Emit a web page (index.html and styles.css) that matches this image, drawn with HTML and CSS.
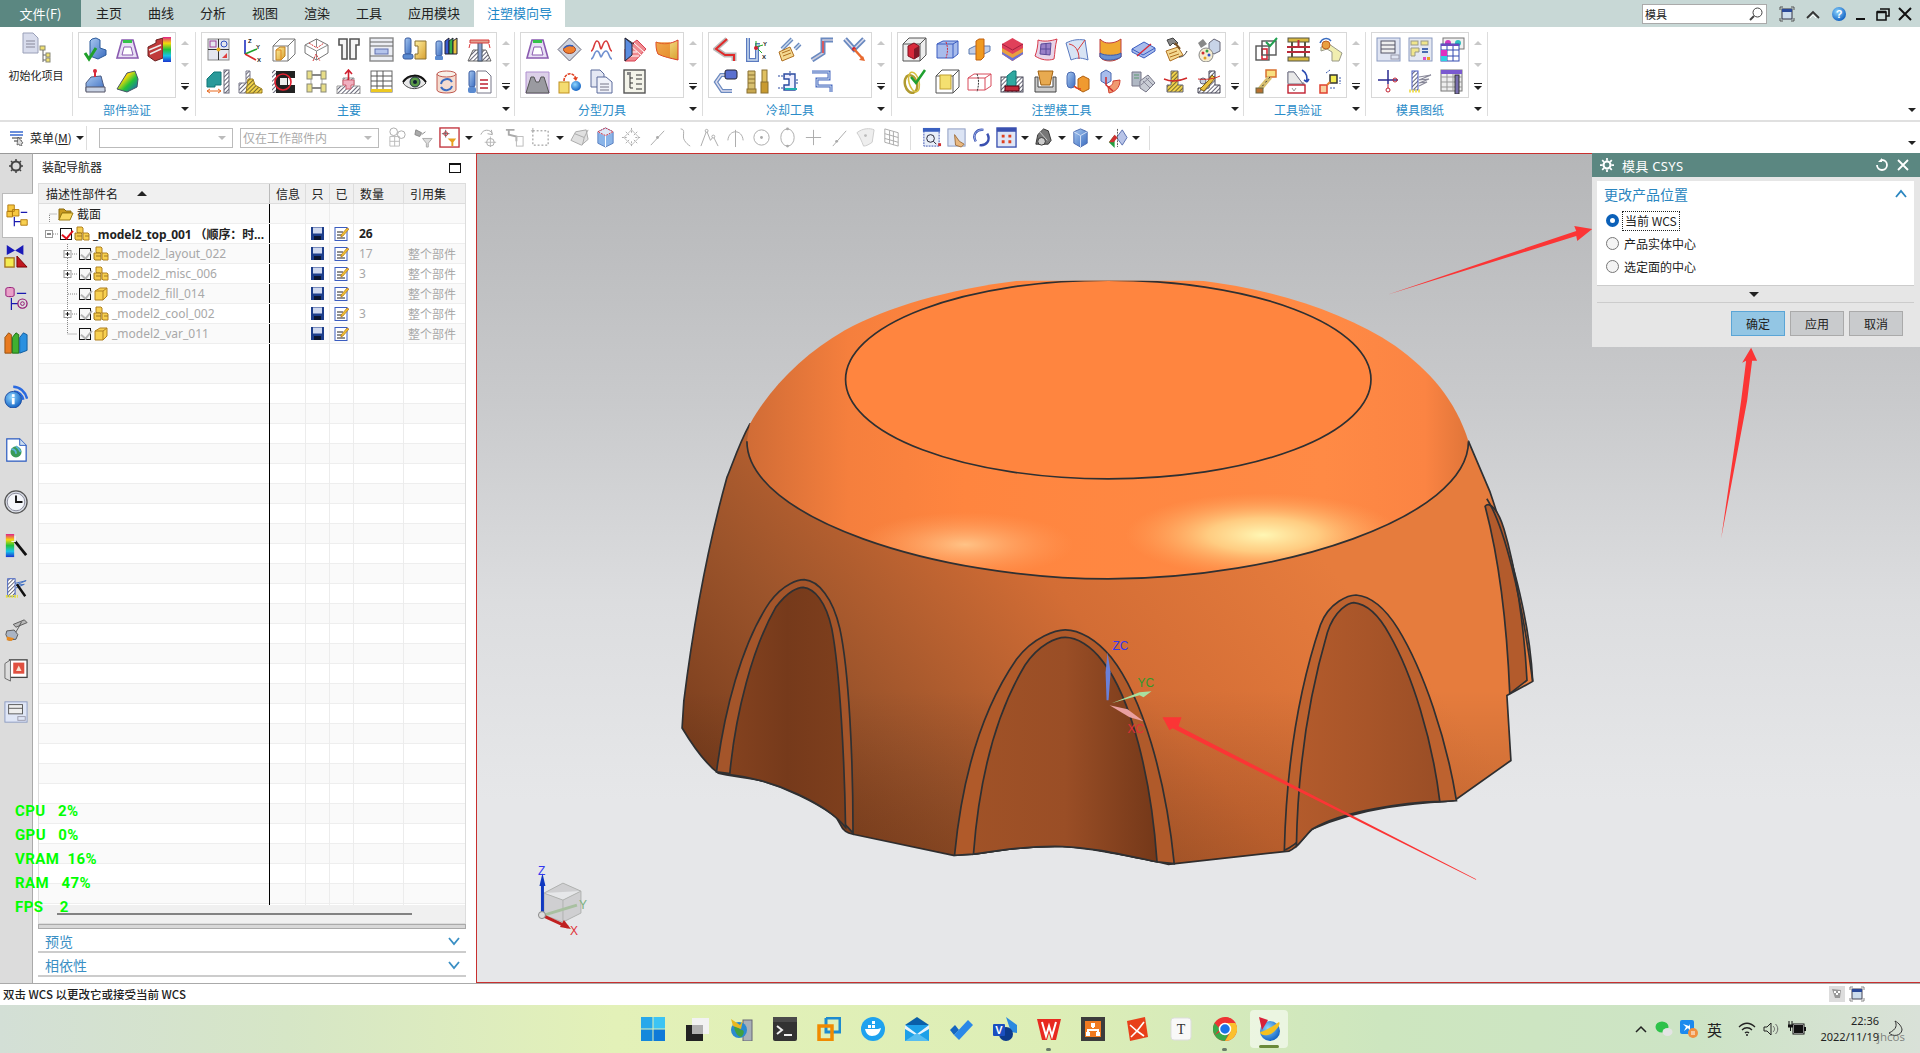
FILE: index.html
```html
<!DOCTYPE html>
<html lang="zh">
<head>
<meta charset="utf-8">
<title>模具 CSYS</title>
<link rel="stylesheet" href="styles.css">
</head>
<body>
<svg class="defs" xmlns="http://www.w3.org/2000/svg">
<defs>
<pattern id="h" width="3" height="3" patternUnits="userSpaceOnUse" patternTransform="rotate(45)"><rect width="3" height="3" fill="#fff"/><rect width="1" height="3" fill="#667"/></pattern>
<pattern id="hy" width="3" height="3" patternUnits="userSpaceOnUse" patternTransform="rotate(45)"><rect width="3" height="3" fill="#f1d24a"/><rect width="1" height="3" fill="#776a30"/></pattern>
<linearGradient id="rb" x1="0" y1="0" x2="0" y2="1"><stop offset="0" stop-color="#e0218a"/><stop offset=".25" stop-color="#f5d90a"/><stop offset=".5" stop-color="#22c23a"/><stop offset=".75" stop-color="#19c4e8"/><stop offset="1" stop-color="#1a34d0"/></linearGradient>
<linearGradient id="rb2" x1="0" y1="0" x2="1" y2="1"><stop offset="0" stop-color="#e8352a"/><stop offset=".35" stop-color="#f5d90a"/><stop offset=".6" stop-color="#22c23a"/><stop offset="1" stop-color="#1a50e0"/></linearGradient>
<linearGradient id="bl" x1="0" y1="0" x2="1" y2="1"><stop offset="0" stop-color="#a8c8f0"/><stop offset="1" stop-color="#3a6cc0"/></linearGradient>
<linearGradient id="yw" x1="0" y1="0" x2="1" y2="1"><stop offset="0" stop-color="#fff0a0"/><stop offset="1" stop-color="#d8a030"/></linearGradient>
<radialGradient id="gl" cx=".4" cy=".35" r=".7"><stop offset="0" stop-color="#8fd6ff"/><stop offset="1" stop-color="#0b5cc0"/></radialGradient>

<symbol id="p1" viewBox="0 0 25 25"><path d="M9 2l4-1 4 2v8l6 2v5l-8 4-8-3V4z" fill="url(#bl)" stroke="#2a5a9a"/><path d="M2 16l4 6 7-11" fill="none" stroke="#1fa02a" stroke-width="3"/></symbol>
<symbol id="p2" viewBox="0 0 25 25"><path d="M7 3h11l5 18H2z" fill="#e8e0f4" stroke="#8a5ab0" stroke-width="1.6"/><path d="M9 10h7l2 8H7z" fill="#fff" stroke="#8a5ab0"/><rect x="8" y="3" width="9" height="3" fill="#35c24a"/></symbol>
<symbol id="p3" viewBox="0 0 25 25"><path d="M1 10l8-4v-3l7-2v20l-8 3-7-5z" fill="#c03a3a" stroke="#6a2020"/><path d="M2 13l12-5M3 17l11-5" stroke="#eee" stroke-width="1.4"/><rect x="16" y="0" width="8" height="25" fill="url(#rb)"/></symbol>
<symbol id="p4" viewBox="0 0 25 25"><path d="M3 14l5-6 10-1 4 15H3z" fill="url(#bl)" stroke="#4a5a80"/><path d="M3 18h19v5H3z" fill="#c8d2e4" stroke="#556"/><path d="M12 1v7" stroke="#d82a3a" stroke-width="2"/><circle cx="12" cy="2" r="2" fill="#d82a3a"/></symbol>
<symbol id="p5" viewBox="0 0 25 25"><path d="M2 20L12 4l8-2 3 8-1 8-10 5z" fill="url(#rb2)" stroke="#456"/></symbol>

<symbol id="m1" viewBox="0 0 25 25"><rect x="2" y="2" width="21" height="21" fill="#e4e6ee" stroke="#888"/><path d="M12.5 2v21M2 12.5h21" stroke="#333"/><rect x="4" y="4" width="6" height="6" fill="none" stroke="#a0409a"/><circle cx="18" cy="7" r="3" fill="none" stroke="#3050c0"/><path d="M16 21l5-5v5z" fill="#e04040"/><circle cx="12.5" cy="12.5" r="2" fill="#e8b020"/></symbol>
<symbol id="m2" viewBox="0 0 25 25"><path d="M7 17V3" stroke="#2030c0" stroke-width="1.6"/><path d="M7 17l12-5" stroke="#1fa02a" stroke-width="1.6"/><path d="M7 17l11 6" stroke="#d82a2a" stroke-width="1.6"/><text class="ict" x="10" y="6">Z</text><text class="ict" x="18" y="12">Y</text><text class="ict" x="19" y="25">X</text></symbol>
<symbol id="m3" viewBox="0 0 25 25"><path d="M9 2h15v15l-7 7H2V9zM2 9h15v15M17 9l7-7" fill="none" stroke="#777"/><path d="M5 13l4-3h5v9l-4 4H5z" fill="url(#yw)" stroke="#c08020"/><path d="M5 13h5v10" fill="none" stroke="#e08a20"/></symbol>
<symbol id="m4" viewBox="0 0 25 25"><path d="M12.5 2L24 8v8l-11.500 7L1 16V8z" fill="none" stroke="#777"/><path d="M12.500 2v8M1 8l11.500 6L24 8M12.500 14v9" fill="none" stroke="#888"/><path d="M5 6l8 5 7-5M9 24l3-7 4 7" fill="none" stroke="#d83a3a" stroke-dasharray="2 1"/></symbol>
<symbol id="m5" viewBox="0 0 25 25"><path d="M3 2h8v20H6V8H3zM14 2h9v6h-3v14h-6z" fill="#f4f4f4" stroke="#555" stroke-width="1.600"/></symbol>
<symbol id="m6" viewBox="0 0 25 25"><rect x="1" y="1" width="23" height="23" fill="#eceef4" stroke="#888" stroke-width="1.400"/><path d="M1 5h23M1 9h23M1 19h23" stroke="#666"/><rect x="6" y="12" width="13" height="5" fill="#b4c4ec" stroke="#6070b0"/></symbol>
<symbol id="m7" viewBox="0 0 25 25"><rect x="3" y="1" width="6" height="16" rx="2" fill="url(#bl)" stroke="#3a5ca0"/><rect x="1" y="17" width="10" height="5" rx="2" fill="#5a8ad0" stroke="#3a5ca0"/><path d="M13 4h11v18H13v-5h3v-8h-3z" fill="url(#yw)" stroke="#8a7030"/></symbol>
<symbol id="m8" viewBox="0 0 25 25"><rect x="2" y="4" width="6" height="15" rx="2" fill="url(#bl)" stroke="#3a5ca0"/><rect x="1" y="19" width="8" height="4" rx="1" fill="#5a8ad0"/><path d="M11 4l4-3v16h-4z" fill="#3a5ad0" stroke="#223"/><path d="M15 4l4-3v16h-4z" fill="#35b04a" stroke="#223"/><path d="M19 4l4-3v16h-4z" fill="#e8c040" stroke="#223"/></symbol>
<symbol id="m9" viewBox="0 0 25 25"><path d="M1 24l5-11h13l5 11z" fill="url(#h)" stroke="#666"/><rect x="11" y="5" width="4" height="19" fill="#8aa0d0" stroke="#456"/><path d="M3 3h19v3H3z" fill="#e0a090" stroke="#d83a3a"/><path d="M3 7l-1 4M22 7l1 4" stroke="#d83a3a"/></symbol>
<symbol id="m10" viewBox="0 0 25 25"><path d="M1 10l7-7h7v13H9v2H1z" fill="#2a9a9a" stroke="#177"/><path d="M1 22h14M1 22l3-2M1 22l3 2M15 22l-3-2M15 22l-3 2" stroke="#e86a20" fill="none"/><rect x="18" y="1" width="5" height="23" fill="url(#h)" stroke="#667"/></symbol>
<symbol id="m11" viewBox="0 0 25 25"><path d="M1 24V14h7V2h4v12h4v10z" fill="url(#h)" stroke="#778"/><path d="M8 24l2-14h5l2 6 7 4v4z" fill="url(#hy)" stroke="#a08020"/></symbol>
<symbol id="m12" viewBox="0 0 25 25"><path d="M1 2h23v7H17v7h7v8H1z" fill="#222"/><rect x="1" y="1" width="4" height="23" fill="url(#h)"/><circle cx="12" cy="13" r="8" fill="none" stroke="#e02030" stroke-width="1.600"/><rect x="9" y="9" width="7" height="7" fill="#eee"/></symbol>
<symbol id="m13" viewBox="0 0 25 25"><path d="M7 6h11M7 19h11" stroke="#888" stroke-width="2"/><path d="M7 6v13M18 6v13" stroke="#aaa"/><rect x="3" y="2" width="5" height="8" fill="#e8de88" stroke="#887"/><rect x="17" y="2" width="5" height="8" fill="#e8de88" stroke="#887"/><rect x="3" y="15" width="5" height="8" fill="#e8de88" stroke="#887"/><rect x="17" y="15" width="5" height="8" fill="#e8de88" stroke="#887"/></symbol>
<symbol id="m14" viewBox="0 0 25 25"><path d="M1 25v-8h6V9h11v8h6v8z" fill="url(#h)" stroke="#999"/><path d="M7 11h11v5h-3v4h-5v-4H7z" fill="#f0b0c0" stroke="#d06070"/><path d="M12.500 1v10M9 5l3.500-4L16 5" fill="none" stroke="#d02030" stroke-width="1.600"/></symbol>
<symbol id="m15" viewBox="0 0 25 25"><rect x="2" y="2" width="21" height="21" fill="#fff" stroke="#666"/><path d="M2 7h21M2 12h21M2 17h21M8 2v21M14 2v21" stroke="#555"/><rect x="2" y="20" width="21" height="3" fill="#ecc820"/></symbol>
<symbol id="m16" viewBox="0 0 25 25"><path d="M1 14C6 6 18 5 24 14c-6 7-17 8-23 0z" fill="#e8e8e8" stroke="#444"/><circle cx="13" cy="13" r="5" fill="#5a9a48" stroke="#234"/><circle cx="13" cy="13" r="2" fill="#123"/><path d="M1 13C6 5 18 4 24 13" fill="none" stroke="#111" stroke-width="2"/></symbol>
<symbol id="m17" viewBox="0 0 25 25"><path d="M3 5v16c0 4 19 4 19 0V5" fill="#f4dcd0" stroke="#c05a50"/><ellipse cx="12.500" cy="5" rx="9.500" ry="3" fill="#f8f0e8" stroke="#c05a50"/><path d="M7 15a6 6 0 0 1 11-2M18 17a6 6 0 0 1-11 1" fill="none" stroke="#3a6cc0" stroke-width="2"/></symbol>
<symbol id="m18" viewBox="0 0 25 25"><rect x="2" y="2" width="6" height="16" rx="2" fill="url(#bl)" stroke="#3a5ca0"/><rect x="1" y="18" width="8" height="6" rx="2" fill="#5a8ad0"/><path d="M10 2h9l5 5v17H10z" fill="#fff" stroke="#778"/><path d="M13 11h8M13 15h8M13 19h8" stroke="#c02030" stroke-width="1.400"/></symbol>

<symbol id="s3" viewBox="0 0 25 25"><path d="M2 14c3 0 3-10 6-10s3 8 4 8 2-8 5-8 3 10 6 10" fill="none" stroke="#d83a3a" stroke-width="1.600"/><path d="M2 22c3 0 3-8 6-8s3 6 4 6 2-6 5-6 3 8 6 8" fill="none" stroke="#7090d0" stroke-width="1.600"/></symbol>
<symbol id="s2" viewBox="0 0 25 25"><path d="M12.500 1L24 12.500 12.500 24 1 12.500z" fill="#d0d4e0" stroke="#667"/><ellipse cx="12.500" cy="12.500" rx="6" ry="4" fill="#f08030" stroke="#a04020"/><path d="M7 11c3-3 7-3 9-2" stroke="#3060c0" fill="none" stroke-width="1.500"/></symbol>
<symbol id="s4" viewBox="0 0 25 25"><path d="M3 12L15 3l9 9-11 12H3z" fill="#f08a90" stroke="#d84050"/><path d="M8 8l11 10M12 6l10 9M3 15h12M8 19h9" stroke="#fff"/><path d="M3 1v23l7-6V7z" fill="#5a8ce0" stroke="#223"/><path d="M3 1l9 6" stroke="#223"/></symbol>
<symbol id="s5" viewBox="0 0 25 25"><path d="M2 5c7 3 15 2 22-2v20c-8-2-14-3-20-6-2-4-2-8-2-12z" fill="url(#yw)" stroke="#d83a2a"/><path d="M2 5c0 4 0 9 2 12 4 2 8 3 12 4V5" fill="#e8781a" opacity=".6"/></symbol>
<symbol id="s6" viewBox="0 0 25 25"><path d="M1 24V3h23v21z" fill="#dcd0e8" stroke="#b090d0"/><path d="M1 24l5-16h3l2 5h3l2-5h3l5 16z" fill="#9a9aa0" stroke="#555"/></symbol>
<symbol id="s7" viewBox="0 0 25 25"><rect x="2" y="13" width="10" height="11" fill="#f4dc70" stroke="#c09020"/><circle cx="19" cy="17" r="5" fill="url(#gl)"/><path d="M7 12C7 3 18 2 19 11" fill="none" stroke="#e04020" stroke-width="1.600" stroke-dasharray="3 1"/><path d="M16 9l3 3 2-4" fill="#e04020"/></symbol>
<symbol id="s8" viewBox="0 0 25 25"><path d="M2 1h9l4 4v13H2z" fill="#e4e8f4" stroke="#5a6a9a"/><path d="M8 8h9l6 5v11H8z" fill="#f0f2fa" stroke="#5a6a9a"/><path d="M11 15h9M11 18h9M11 21h9" stroke="#778"/></symbol>
<symbol id="s9" viewBox="0 0 25 25"><rect x="2" y="1" width="21" height="23" fill="#f4f4ea" stroke="#555" stroke-width="1.400"/><path d="M8 5v14M8 9h3M8 14h3M8 19h3M14 6h6M14 10h6M14 15h6M14 20h6" stroke="#333"/><rect x="5" y="3" width="4" height="3" fill="#888"/></symbol>

<symbol id="c1" viewBox="0 0 25 25"><path d="M14 2L3 12l9 6h9v6" fill="none" stroke="#bbb" stroke-width="5"/><path d="M14 2L3 12l9 6h9v6" fill="none" stroke="#e02a2a" stroke-width="2"/></symbol>
<symbol id="c2" viewBox="0 0 25 25"><path d="M3 1v22h9V8h3" fill="none" stroke="#5a7ac0" stroke-width="4"/><path d="M3 1v22h9V8h3" fill="none" stroke="#cde" stroke-width="1.500"/><path d="M11 10l7-2M11 10V4M11 10l6 6" stroke="#2a2" /><text class="ict" x="18" y="9">Y</text><text class="ict" x="17" y="22">X</text><circle cx="11" cy="11" r="2" fill="#d02030"/></symbol>
<symbol id="c3" viewBox="0 0 25 25"><path d="M5 12L15 2M18 12l5-5" fill="none" stroke="#6a8ac0" stroke-width="4"/><path d="M5 12L15 2M18 12l5-5" fill="none" stroke="#cde" stroke-width="1.400"/><path d="M2 15l11-5 4 9-12 5z" fill="#f4d890" stroke="#b07020"/><path d="M5 16l8-3M6 19l8-3" stroke="#b07020"/></symbol>
<symbol id="c4" viewBox="0 0 25 25"><path d="M2 23l11-7V3h10" fill="none" stroke="#6a8ac0" stroke-width="5"/><path d="M2 23l11-7V3h10" fill="none" stroke="#ccd" stroke-width="1.500"/><path d="M13 4v12" stroke="#e03a3a" stroke-width="1.500"/></symbol>
<symbol id="c5" viewBox="0 0 25 25"><path d="M3 2l9 10L22 2" fill="none" stroke="#6a8ac0" stroke-width="5"/><path d="M3 2l9 10L22 2" fill="none" stroke="#dde" stroke-width="1.500"/><circle cx="12" cy="12" r="2" fill="#d02030"/><path d="M12 12l9 10" stroke="#e86a30" stroke-width="2.500"/><path d="M23 24l-6-1 4-4z" fill="#e86a30"/></symbol>
<symbol id="c6" viewBox="0 0 25 25"><path d="M16 6H8L3 13l6 9h10" fill="none" stroke="#6a8ac0" stroke-width="4"/><path d="M16 6H8L3 13l6 9h10" fill="none" stroke="#dde" stroke-width="1.400"/><rect x="12" y="1" width="12" height="9" rx="2" fill="#5a70d0" stroke="#223"/></symbol>
<symbol id="c7" viewBox="0 0 25 25"><path d="M3 2h7v20H3zM3 6h7M3 10h7M3 14h7" fill="#d8c070" stroke="#8a7030"/><rect x="2" y="20" width="9" height="4" fill="#c8a850" stroke="#8a7030"/><rect x="17" y="1" width="5" height="14" fill="#e0c060" stroke="#8a7030"/><rect x="16" y="13" width="7" height="11" fill="#c89a30" stroke="#8a7030"/></symbol>
<symbol id="c8" viewBox="0 0 25 25"><path d="M7 5h11v16H7v-5h5V10H7z" fill="#eef" stroke="#2a4aa0" stroke-width="1.400"/><path d="M1 7h7M1 19h7M13 2v5M20 10v5" stroke="#2a4aa0" stroke-dasharray="2 1"/><path d="M8 20h12" stroke="#20b0b0" stroke-width="2"/></symbol>
<symbol id="c9" viewBox="0 0 25 25"><path d="M2 3h17v7H7v7h14v6" fill="none" stroke="#4a6ac0" stroke-width="3"/><path d="M2 3h17v7H7v7h14v6" fill="none" stroke="#cde" stroke-width="1"/></symbol>

<symbol id="t1" viewBox="0 0 25 25"><path d="M1 7l6-6h17v17l-6 6H1z" fill="#eee" stroke="#555"/><path d="M1 7h17v17M18 7l6-6" fill="none" stroke="#555"/><path d="M6 9l6-3 5 3v10l-5 3-6-3z" fill="#d8283a" stroke="#801020"/><path d="M12 12l5-3v10l-5 3z" fill="#801828"/></symbol>
<symbol id="t2" viewBox="0 0 25 25"><path d="M2 7l6-3h15v13l-5 4H2z" fill="#a8bcec" stroke="#3a5cc0"/><path d="M2 7h16v14M18 7l5-3" fill="none" stroke="#3a5cc0"/><path d="M11 5c2 5 2 10 0 16" stroke="#d02a3a" fill="none" stroke-dasharray="2 1"/></symbol>
<symbol id="t3" viewBox="0 0 25 25"><path d="M2 12l6-3h15v5l-6 3H2z" fill="#c0cde8" stroke="#5a7ab0"/><path d="M9 4l3-2h5v18l-3 3H9z" fill="#f09a20" stroke="#c06010"/></symbol>
<symbol id="t4" viewBox="0 0 25 25"><path d="M12.500 1L23 7v10l-10.500 7L2 17V7z" fill="#e0405a"/><path d="M2 11l10.500 6L23 11v6l-10.500 7L2 17z" fill="#e8a040"/><path d="M2 15l10.500 6L23 15v2l-10.500 7L2 17z" fill="#6a70d8"/><path d="M2 7l10.500 6L23 7" fill="none" stroke="#a02040"/></symbol>
<symbol id="t5" viewBox="0 0 25 25"><path d="M5 3c6 2 13 1 19-1-2 7-2 14-3 20-6 2-13 1-19-3 2-5 3-11 3-16z" fill="#e8d4e8" stroke="#d83a4a"/><path d="M8 7l10-1-1 12-10-1zM13 6v12M8 12h10" fill="#9a80c8" stroke="#5a4a98"/></symbol>
<symbol id="t6" viewBox="0 0 25 25"><path d="M1 6c6-3 11-4 19-3l3 20c-8-3-12-2-17 0z" fill="#d8e4f4" stroke="#5a7ac0"/><path d="M4 7c6 1 10 6 10 15M20 3L12 14" fill="none" stroke="#d83a3a"/></symbol>
<symbol id="t7" viewBox="0 0 25 25"><path d="M2 2c3 3 5 4 9 4 4 0 8-1 12-4v18c-4 3-8 4-11 4-4 0-8-1-10-4z" fill="#f0a830" stroke="#c04040"/><path d="M2 16c4 3 17 3 21 0v4c-4 3-17 5-21 0z" fill="#6a90d0" stroke="#3a5ab0"/></symbol>
<symbol id="t8" viewBox="0 0 25 25"><path d="M1 12l12-7 11 6v3l-11 7-12-6z" fill="#a8bcec" stroke="#3a5cc0"/><path d="M1 12l11 6 12-7" fill="none" stroke="#3a5cc0"/><path d="M6 19L20 7" stroke="#d82a3a" stroke-width="1.400"/></symbol>
<symbol id="t9" viewBox="0 0 25 25"><path d="M3 14l12-4 5 8-13 6z" fill="#f4d890" stroke="#b07020"/><path d="M6 17l8-3M7 20l9-3" stroke="#b07020"/><path d="M4 3l6-2 5 5-3 2-2-2-3 3z" fill="#888" stroke="#444"/><path d="M12 6l5 6" stroke="#7a5020" stroke-width="2"/><path d="M16 20c4 0 6-2 8-6" fill="none" stroke="#333"/></symbol>
<symbol id="t10" viewBox="0 0 25 25"><path d="M13 6l5-4 6 3v9l-6 3-5-3z" fill="#c8d4e8" stroke="#667"/><path d="M2 6l5-4 4 5-6 4z" fill="#888"/><circle cx="10" cy="18" r="7" fill="#f4ecd0" stroke="#888"/><circle cx="7" cy="16" r="1.500" fill="#d03030"/><circle cx="11" cy="14" r="1.500" fill="#30a040"/><circle cx="13" cy="18" r="1.500" fill="#3050d0"/><circle cx="9" cy="21" r="1.500" fill="#e0a020"/></symbol>
<symbol id="t11" viewBox="0 0 25 25"><ellipse cx="9" cy="15" rx="6" ry="9" fill="none" stroke="#b09a30" stroke-width="2.500" transform="rotate(-15 9 15)"/><ellipse cx="12" cy="13" rx="5" ry="10" fill="none" stroke="#d8c040" stroke-width="1.500" transform="rotate(-15 12 13)"/><path d="M9 8l5 6 9-13" fill="none" stroke="#20a030" stroke-width="2.500"/></symbol>
<symbol id="t12" viewBox="0 0 25 25"><path d="M1 7l6-6h17v17l-6 6H1z" fill="#fff" stroke="#555"/><path d="M1 7h17v17M18 7l6-6" fill="none" stroke="#555"/><rect x="5" y="6" width="11" height="14" fill="#f4e070" stroke="#c0a030"/></symbol>
<symbol id="t13" viewBox="0 0 25 25"><path d="M1 9l6-4h17v12l-6 4H1z" fill="#fff" stroke="#d84a5a"/><path d="M1 9h17v12M18 9l6-4" fill="none" stroke="#d84a5a"/><path d="M10 5c2 5 2 11 0 18" fill="none" stroke="#333" stroke-dasharray="2 1"/></symbol>
<symbol id="t14" viewBox="0 0 25 25"><rect x="1" y="8" width="22" height="15" fill="url(#h)" stroke="#445"/><path d="M7 19V7l6-5h3v17z" fill="#30a8a0" stroke="#177"/><rect x="5" y="17" width="14" height="5" fill="#c02a3a" stroke="#501"/></symbol>
<symbol id="t15" viewBox="0 0 25 25"><path d="M2 8h3v10h15V8h3v15H2z" fill="#ccc" stroke="#444"/><path d="M5 2h15l-3 14H8z" fill="#e8aa50" stroke="#a06010"/></symbol>
<symbol id="t16" viewBox="0 0 25 25"><rect x="2" y="3" width="8" height="16" rx="4" fill="url(#bl)" stroke="#4a6ab0"/><path d="M13 10l5-3 6 3v10l-6 3-5-3z" fill="#f09a30" stroke="#b06010"/><path d="M9 17c3 3 5 3 7 3" fill="none" stroke="#e04020" stroke-width="1.600"/></symbol>
<symbol id="t17" viewBox="0 0 25 25"><path d="M3 4l5-3 5 3v8l-5 3-5-3z" fill="#a8bcec" stroke="#4a6ab0"/><path d="M11 24c6-1 11-5 11-13l-7 1c0 4-2 5-5 6z" fill="#f09a70" stroke="#d04030"/><path d="M8 8v8l7 6" fill="none" stroke="#d02a2a" stroke-width="1.500"/></symbol>
<symbol id="t18" viewBox="0 0 25 25"><path d="M1 3h9v14H1z" fill="#b0b8c4" stroke="#778"/><path d="M9 12l8-6 7 8-9 9-6-4z" fill="#c8ccd4" stroke="#778"/><path d="M12 12l7 7M15 9l7 7M10 16l8-7" stroke="#889"/><path d="M3 6h5M3 9h5" stroke="#5a9a70"/></symbol>
<symbol id="t19" viewBox="0 0 25 25"><path d="M8 2h7v14h5v7H4v-7h4z" fill="url(#hy)" stroke="#667"/><path d="M1 10c7 3 16 2 23-1" fill="none" stroke="#d02a2a" stroke-width="1.400"/></symbol>
<symbol id="t20" viewBox="0 0 25 25"><path d="M13 2h6v14h5v8H2v-5h11z" fill="url(#h)" stroke="#445"/><path d="M4 20l8-8 4-6 3 3-4 5-7 8z" fill="#e8c040" stroke="#806010"/><circle cx="7" cy="12" r="3" fill="#c8d0e0" stroke="#667"/><path d="M2 10c7 1 16 0 22-3" fill="none" stroke="#d02a2a"/></symbol>

<symbol id="v1" viewBox="0 0 25 25"><rect x="2" y="9" width="13" height="14" fill="#fff" stroke="#555" stroke-width="1.400"/><rect x="8" y="12" width="5" height="10" fill="none" stroke="#d82a3a" stroke-width="1.600"/><rect x="8" y="4" width="14" height="14" fill="none" stroke="#555" stroke-width="1.400"/><path d="M12 5l4 4 7-8" fill="none" stroke="#20a050" stroke-width="2"/></symbol>
<symbol id="v2" viewBox="0 0 25 25"><rect x="2" y="1" width="21" height="4" fill="#d8b840" stroke="#554"/><rect x="2" y="20" width="21" height="4" fill="#d8b840" stroke="#554"/><path d="M6 5v15M19 5v15" stroke="#554" stroke-width="2"/><path d="M1 10h23M1 15h23" stroke="#b82a3a" stroke-width="2"/><path d="M12.500 3v7" stroke="#b82a3a" stroke-width="2"/></symbol>
<symbol id="v3" viewBox="0 0 25 25"><path d="M3 10l8-3 13 9-3 8h-7v-9l-5-3-6 2z" fill="#f0eeb0" stroke="#998"/><circle cx="8" cy="8" r="4" fill="#e8a040" stroke="#c06020"/><path d="M2 6C4 1 10 0 13 4" fill="none" stroke="#3a6cc0" stroke-width="1.500"/></symbol>
<symbol id="v4" viewBox="0 0 25 25"><rect x="12" y="1" width="10" height="7" fill="#f8e080" stroke="#d87030" stroke-width="1.500"/><path d="M16 8L6 20" stroke="#d8c070" stroke-width="5"/><path d="M16 8L6 20" stroke="#333" stroke-dasharray="2 3"/><rect x="2" y="19" width="7" height="5" fill="#b87030" stroke="#664"/></symbol>
<symbol id="v5" viewBox="0 0 25 25"><path d="M2 3h6l10 14v-3H2z" fill="#ddd" stroke="#778"/><path d="M2 3h6l9 12H2z" fill="#e8e8e8" stroke="#778"/><rect x="2" y="16" width="17" height="8" fill="#fff" stroke="#c02030" stroke-width="1.400"/><path d="M16 1c5 3 6 8 4 12M21 13l-3-2M21 13l2-3" fill="none" stroke="#2a4ab0" stroke-width="1.600"/><path d="M6 19l2 3 2-3" fill="none" stroke="#999"/></symbol>
<symbol id="v6" viewBox="0 0 25 25"><rect x="12" y="6" width="7" height="8" fill="#f4ec50" stroke="#333" stroke-width="1.500"/><rect x="2" y="16" width="7" height="8" fill="#f8d0a0" stroke="#e04030" stroke-width="1.500"/><path d="M8 4l4-3M22 8v7M12 19h5" stroke="#3a5ab0" stroke-dasharray="2 1"/><path d="M9 16l3-3" stroke="#e08030" stroke-width="2"/></symbol>

<symbol id="d1" viewBox="0 0 25 25"><rect x="1" y="1" width="23" height="23" fill="#dfe4f2" stroke="#8a9ac0"/><rect x="5" y="4" width="14" height="12" fill="#eee" stroke="#556"/><path d="M5 8h14M5 12h14" stroke="#556"/><rect x="15" y="18" width="8" height="4" fill="none" stroke="#99a"/></symbol>
<symbol id="d2" viewBox="0 0 25 25"><rect x="1" y="1" width="23" height="23" fill="#e4e8f2" stroke="#8a9ac0"/><rect x="3" y="4" width="7" height="4" fill="#f0e68c" stroke="#998"/><rect x="13" y="4" width="7" height="4" fill="#f0e68c" stroke="#998"/><path d="M3 11h8v4H7v4H3z" fill="#f0e68c" stroke="#998"/><path d="M14 12h6M14 15h6" stroke="#4a6ab0" stroke-width="2"/><rect x="15" y="20" width="3" height="3" fill="#e04ac0"/><rect x="19" y="20" width="3" height="3" fill="#f0a020"/></symbol>
<symbol id="d3" viewBox="0 0 25 25"><rect x="3" y="1" width="21" height="11" fill="#f0f0f0" stroke="#777"/><circle cx="8" cy="6" r="3" fill="#d03ac0"/><circle cx="18" cy="6" r="3" fill="#30c0c0"/><rect x="1" y="7" width="18" height="17" fill="#fff" stroke="#334ab0"/><path d="M1 13h18M1 19h18M7 7v17M13 7v17" stroke="#334ab0"/><rect x="1" y="13" width="6" height="6" fill="#e030c0"/><rect x="1" y="19" width="6" height="5" fill="#30d0e0"/><rect x="1" y="7" width="18" height="2" fill="#6a4ac0"/></symbol>
<symbol id="d4" viewBox="0 0 25 25"><path d="M12 1v14M2 11h20" stroke="#2a2a90" stroke-width="1.500"/><path d="M12 15v4" stroke="#c02030"/><circle cx="19" cy="11" r="2" fill="none" stroke="#c02030"/><circle cx="12" cy="21" r="2" fill="none" stroke="#c02030"/></symbol>
<symbol id="d5" viewBox="0 0 25 25"><rect x="4" y="2" width="6" height="19" fill="url(#h)" stroke="#4a5ac0"/><path d="M11 8l12-2-12 5 10-1-10 4 8-1-8 4" fill="none" stroke="#889" stroke-width="1.200"/><path d="M1 22h12" stroke="#f0e060" stroke-width="3" stroke-dasharray="2 1"/></symbol>
<symbol id="d6" viewBox="0 0 25 25"><rect x="1" y="1" width="21" height="21" fill="#eee" stroke="#777"/><path d="M1 8h21M1 13h21M1 18h21M7 4v18M13 4v18" stroke="#999"/><rect x="1" y="1" width="21" height="4" fill="#7a5ad0"/><rect x="15" y="6" width="4" height="19" fill="#7a70b0" stroke="#333"/></symbol>

<symbol id="asm" viewBox="0 0 16 16"><path d="M3 1h5l1 1v5H4L3 6z" fill="#f8d050" stroke="#b08020"/><path d="M9 7h5l1 1v6H10L9 13z" fill="#f8d050" stroke="#b08020"/><path d="M1 7h6l1 1v6H2l-1-1z" fill="#f4c848" stroke="#a07a20"/><path d="M3 10h5M11 10h4" stroke="#a07a20"/></symbol>
<symbol id="part" viewBox="0 0 16 16"><path d="M2 5l5-3h7v8l-4 4H2z" fill="#f8d050" stroke="#b08020"/><path d="M2 5h8v9M10 5l4-3" fill="none" stroke="#b08020"/></symbol>
<symbol id="save" viewBox="0 0 15 15"><path d="M1 1h13v13H1z" fill="#1c3d8a"/><rect x="3" y="1.500" width="9" height="6" fill="#cfd8ee"/><rect x="4" y="10" width="7" height="4" fill="#0a1530"/></symbol>
<symbol id="edit" viewBox="0 0 15 15"><rect x="1" y="1.500" width="12" height="13" fill="#fff" stroke="#3a5cc0"/><path d="M3 6h6M3 9h6M3 12h8" stroke="#222"/><path d="M7 9l6-7 2 1-6 7-2 1z" fill="#f0c030" stroke="#a06010" stroke-width=".6"/></symbol>
<symbol id="folder" viewBox="0 0 16 16"><path d="M1 14V3h5l2 2h5v2H4z" fill="#c89a20" stroke="#8a6a10"/><path d="M1 14l3-7h11l-3 7z" fill="#f8d860" stroke="#9a7a10"/></symbol>

<symbol id="g1" viewBox="0 0 22 22"><circle cx="7" cy="5" r="4" fill="none" stroke="#aaa"/><circle cx="15" cy="8" r="4" fill="none" stroke="#aaa"/><path d="M3 10h10v10H3zM8 10v10M3 15h10" fill="none" stroke="#bbb"/></symbol>
<symbol id="g2" viewBox="0 0 22 22"><path d="M3 3l6 3-2 4-5-2zM9 8l4-3" fill="#aaa" stroke="#888"/><path d="M10 12h10l-4 5v4h-2v-4z" fill="#ddd" stroke="#aaa"/></symbol>
<symbol id="g3" viewBox="0 0 22 22"><rect x="1" y="1" width="20" height="20" fill="#fff" stroke="#c0303a" stroke-width="1.400"/><path d="M7 3v8M3 7h8" stroke="#666"/><circle cx="7" cy="7" r="2" fill="none" stroke="#c0303a"/><path d="M9 12h9l-3 4v4h-2v-4z" fill="#e8a020"/></symbol>
<symbol id="g4" viewBox="0 0 22 22"><path d="M3 8c2-6 10-6 12-1M14 3l1 5-5-1" fill="none" stroke="#aaa"/><path d="M13 10v11M7 16h12" stroke="#bbb"/><circle cx="13" cy="16" r="4" fill="none" stroke="#aaa"/></symbol>
<symbol id="g5" viewBox="0 0 22 22"><path d="M2 3h9M5 3v5l8 2v5" fill="none" stroke="#aaa" stroke-width="2"/><rect x="13" y="10" width="7" height="10" fill="none" stroke="#bbb"/></symbol>
<symbol id="g6" viewBox="0 0 22 22"><rect x="3" y="4" width="16" height="15" fill="none" stroke="#888" stroke-dasharray="2 2"/><path d="M1 4h2M3 1v3" stroke="#aaa"/></symbol>
<symbol id="g7" viewBox="0 0 22 22"><path d="M2 14l5-9 11-2 2 10-7 6z" fill="#e0e0e0" stroke="#aaa"/><path d="M6 7l10 4 4-8M16 11l-2 8" fill="none" stroke="#aaa"/></symbol>
<symbol id="g8" viewBox="0 0 22 22"><path d="M3 5l8-4 8 4v12l-8 4-8-4z" fill="#8ab4e8" stroke="#5a80c0"/><path d="M3 5l8 4 8-4M11 9v12" fill="none" stroke="#fff"/><path d="M3 5l8-4 8 4-8 4z" fill="#dde6f6" stroke="#d03040" stroke-dasharray="2 1"/></symbol>
<symbol id="g9" viewBox="0 0 22 22"><path d="M11 3l8 8-8 8-8-8z" fill="none" stroke="#bbb"/><path d="M11 1v6M11 15v6M1 11h6M15 11h6M5 5l4 4M17 5l-4 4M5 17l4-4M17 17l-4-4" stroke="#aaa" stroke-dasharray="2 1"/></symbol>
<symbol id="g10" viewBox="0 0 22 22"><path d="M4 19L18 4" stroke="#aaa"/><circle cx="11" cy="11" r="1.500" fill="#aaa"/></symbol>
<symbol id="g11" viewBox="0 0 22 22"><path d="M8 2c6 0 1 8 4 12 2 3 3 4 6 6" fill="none" stroke="#aaa"/></symbol>
<symbol id="g12" viewBox="0 0 22 22"><path d="M2 20L8 4l4 10 3-4 5 10" fill="none" stroke="#aaa"/><circle cx="8" cy="4" r="1.500" fill="#fff" stroke="#aaa"/><circle cx="15" cy="10" r="1.500" fill="#fff" stroke="#aaa"/></symbol>
<symbol id="g13" viewBox="0 0 22 22"><path d="M3 14c1-12 15-12 16 0M11 3v18" fill="none" stroke="#aaa"/></symbol>
<symbol id="g14" viewBox="0 0 22 22"><circle cx="11" cy="11" r="8" fill="none" stroke="#aaa"/><circle cx="11" cy="11" r="1.500" fill="#aaa"/></symbol>
<symbol id="g15" viewBox="0 0 22 22"><ellipse cx="11" cy="11" rx="7" ry="9" fill="none" stroke="#aaa"/><circle cx="11" cy="2" r="1.500" fill="#aaa"/><circle cx="11" cy="20" r="1.500" fill="#aaa"/></symbol>
<symbol id="g16" viewBox="0 0 22 22"><path d="M11 3v16M3 11h16" stroke="#aaa"/></symbol>
<symbol id="g17" viewBox="0 0 22 22"><path d="M4 20L18 4" stroke="#aaa"/><circle cx="8" cy="15" r="1.500" fill="#aaa"/></symbol>
<symbol id="g18" viewBox="0 0 22 22"><path d="M2 6c6-5 14-5 18-3l-2 13c-3 2-6 4-9 4-2-5-4-10-7-14z" fill="#eee" stroke="#ccc"/><circle cx="11" cy="9" r="1.500" fill="#bbb"/></symbol>
<symbol id="g19" viewBox="0 0 22 22"><path d="M4 2l14 4v14L4 16zM9 3.500v14M13 5v14M4 7l14 4M4 12l14 4" fill="none" stroke="#aaa"/></symbol>
<symbol id="n1" viewBox="0 0 22 22"><rect x="3" y="3" width="16" height="17" fill="#e8eef8" stroke="#3a50b0" stroke-dasharray="2 1"/><rect x="2" y="1" width="18" height="4" fill="#3a60c0"/><circle cx="10" cy="12" r="4" fill="none" stroke="#223"/><path d="M13 15l3 3" stroke="#223"/><rect x="18" y="17" width="3" height="3" fill="#d03030"/></symbol>
<symbol id="n2" viewBox="0 0 22 22"><rect x="2" y="2" width="18" height="18" fill="#dce4f4" stroke="#8a9ac0"/><path d="M9 8l5 7 5 3-3 3-6-2z" fill="#e8b880" stroke="#a07040"/></symbol>
<symbol id="n3" viewBox="0 0 22 22"><path d="M5 15C1 8 6 2 13 3" fill="none" stroke="#3a50b0" stroke-width="2.500"/><path d="M17 7c4 7-1 13-8 12" fill="none" stroke="#3a50b0" stroke-width="2.500"/><path d="M5 15C1 8 6 2 13 3" fill="none" stroke="#9ab0e8"/></symbol>
<symbol id="n4" viewBox="0 0 22 22"><rect x="1" y="1" width="20" height="20" fill="#dfe6f6" stroke="#3a50b0" stroke-width="1.400"/><rect x="1" y="1" width="20" height="4" fill="#3a50b0"/><path d="M6 8h3v3H6zM13 8h3v3h-3zM6 14h3v3H6zM13 14h3v3h-3z" fill="#e04020"/></symbol>
<symbol id="n5" viewBox="0 0 22 22"><path d="M3 18L5 8l6-6 5 2 3 10-3 4z" fill="#777" stroke="#333"/><circle cx="9" cy="15" r="4" fill="#ccc" stroke="#333"/><path d="M7 5l8 9" stroke="#ccc"/></symbol>
<symbol id="n6" viewBox="0 0 22 22"><path d="M4 5l7-3 7 3v12l-7 4-7-4z" fill="url(#bl)" stroke="#4a6ab0"/><path d="M4 5l7 4 7-4M11 9v12" fill="none" stroke="#d4e0f4"/></symbol>
<symbol id="n7" viewBox="0 0 22 22"><path d="M10 11l6-8 5 8-5 8z" fill="#b8c4e8" stroke="#5a70b0"/><path d="M2 16l6-8v14z" fill="#20a040"/><path d="M2 16l6-8 3 3-4 5z" fill="#d03030"/><path d="M11 2v19" stroke="#555" stroke-dasharray="2 1"/></symbol>

<symbol id="l1" viewBox="0 0 26 26"><path d="M2 1h7v7H2zM7 6h7v7H7zM1 8h6v6H1z" fill="#f8c840" stroke="#b07a10"/><path d="M16 9h7M9 14v10M9 19h7" stroke="#1a1ab0" stroke-width="1.300"/><path d="M16 17h7v6h-7z" fill="#f8d050" stroke="#b07a10"/></symbol>
<symbol id="l2" viewBox="0 0 26 26"><path d="M3 1l9 6 9-6v11l-9-5-9 5z" fill="#1a1ab8"/><rect x="1" y="15" width="10" height="10" fill="#f4ec50" stroke="#a07020" stroke-width="1.400"/><path d="M14 25V13l11 12z" fill="#c01820" stroke="#700"/></symbol>
<symbol id="l3" viewBox="0 0 26 26"><path d="M2 2c0-2 9-2 9 0v7c0 2-9 2-9 0z" fill="#e8a0c8" stroke="#901070"/><path d="M14 7h10M8 12v13M8 18h7" stroke="#1a1ab0" stroke-width="1.300"/><circle cx="20" cy="18" r="5" fill="none" stroke="#901070" stroke-width="1.300"/><circle cx="20" cy="18" r="2" fill="none" stroke="#901070"/></symbol>
<symbol id="l4" viewBox="0 0 26 26"><path d="M1 7l4-5 3 2v20H1z" fill="#e87a20" stroke="#94500f"/><path d="M9 7l4-5 3 2v20H9z" fill="#40b030" stroke="#1a6a10"/><path d="M17 7l4-5 4 2v17l-8 3z" fill="#2a90e0" stroke="#105a9a"/></symbol>
<symbol id="l5" viewBox="0 0 26 26"><path d="M10 3c7 0 13 5 15 13M11 8c5 0 9 4 10 9" fill="none" stroke="#2a6ae0" stroke-width="2.600"/><circle cx="10" cy="17" r="9" fill="url(#gl)" stroke="#1a4aa0"/><rect x="8.500" y="15" width="3" height="7" fill="#fff"/><rect x="8.500" y="11" width="3" height="3" fill="#fff"/></symbol>
<symbol id="l6" viewBox="0 0 26 26"><path d="M3 1h14l7 7v17H3z" fill="#fff" stroke="#2a5ac0" stroke-width="1.300"/><path d="M17 1v7h7" fill="#cde" stroke="#2a5ac0"/><circle cx="13" cy="15" r="6" fill="#3a9a58"/><path d="M8 12c3 0 5 2 5 5M13 9c3 2 4 4 5 6" stroke="#5ab0d8" stroke-width="2" fill="none"/></symbol>
<symbol id="l7" viewBox="0 0 26 26"><circle cx="13" cy="13" r="12" fill="#d8dce4" stroke="#555" stroke-width="1.400"/><circle cx="13" cy="13" r="9.500" fill="#f4f6fa" stroke="#889"/><path d="M13 6v7h7" fill="none" stroke="#111" stroke-width="2"/></symbol>
<symbol id="l8" viewBox="0 0 26 26"><rect x="2" y="0" width="9" height="25" fill="url(#rb)"/><path d="M12 8l12 15" stroke="#111" stroke-width="3"/><path d="M12 2v5M8 8h5" stroke="#fff"/></symbol>
<symbol id="l9" viewBox="0 0 26 26"><rect x="4" y="3" width="8" height="19" fill="url(#h)" stroke="#3a5ac0"/><path d="M12 8l12-3-11 5 9-1-9 4" fill="none" stroke="#3a6ac0"/><path d="M2 22h13" stroke="#e8e040" stroke-width="3" stroke-dasharray="2 1"/><path d="M14 9l9 13" stroke="#111" stroke-width="2.600"/></symbol>
<symbol id="l10" viewBox="0 0 26 26"><path d="M10 7l12-5 3 3-12 5zM19 4l-3 6-6 10" fill="#b8b8b8" stroke="#555"/><path d="M3 14l8-1 4 5-2 5-8 1-3-6z" fill="#aab4c4" stroke="#555"/><path d="M3 20l8 2-3 3-5-1z" fill="#e88a20"/></symbol>
<symbol id="l11" viewBox="0 0 26 26"><rect x="6" y="2" width="19" height="19" fill="#fff" stroke="#444" stroke-width="1.400"/><path d="M1 6l6-4v23l-6-3z" fill="#ddd" stroke="#666"/><rect x="10" y="5" width="12" height="12" fill="#e05040"/><path d="M13 14l3-6 3 6z" fill="#f8e0d0"/></symbol>
<symbol id="l12" viewBox="0 0 26 26"><rect x="1" y="2" width="24" height="22" fill="#dfe6f6" stroke="#8a9ac0"/><rect x="5" y="5" width="15" height="10" fill="#eee" stroke="#555"/><path d="M5 9h15" stroke="#555"/><rect x="15" y="18" width="8" height="4" fill="none" stroke="#99a"/></symbol>
</defs>
</svg>

<div class="app">
  <header class="menubar">
    <div class="filetab">文件(F)</div>
    <nav class="tabs">
      <span class="tab">主页</span><span class="tab">曲线</span><span class="tab">分析</span><span class="tab">视图</span><span class="tab">渲染</span><span class="tab">工具</span><span class="tab">应用模块</span><span class="tab tab-on">注塑模向导</span>
    </nav>
    <div class="topright">
      <div class="search"><span>模具</span><svg class="w14" viewBox="0 0 14 14"><circle cx="8.500" cy="5.500" r="4.500" fill="#fff" stroke="#444"/><path d="M5 9l-4 4" stroke="#444" stroke-width="2"/></svg></div>
      <svg class="w16" viewBox="0 0 16 16"><path d="M1 4V1h3M12 1h3v3M15 12v3h-3M4 15H1v-3" fill="none" stroke="#555"/><rect x="3" y="3" width="10" height="10" fill="#cde" stroke="#334"/><rect x="3" y="3" width="10" height="3" fill="#2a4a9a"/></svg>
      <svg class="w16 sp4" viewBox="0 0 16 16"><path d="M2 12l6-6 6 6" fill="none" stroke="#333" stroke-width="1.800"/><path d="M5 12l3-3 3 3" fill="none" stroke="#fff"/></svg>
      <svg class="w16 sp4" viewBox="0 0 16 16"><circle cx="8" cy="8" r="7" fill="url(#gl)"/><text class="qm" x="8" y="12">?</text></svg>
      <svg class="w16" viewBox="0 0 16 16"><path d="M3 13h9" stroke="#111" stroke-width="2"/></svg>
      <svg class="w16" viewBox="0 0 16 16"><path d="M5 3h9v7h-3M2 6h9v8H2z" fill="none" stroke="#111" stroke-width="1.600"/><path d="M2 6h9" stroke="#111" stroke-width="2.500"/></svg>
      <svg class="w16" viewBox="0 0 16 16"><path d="M2 2l12 12M14 2L2 14" stroke="#111" stroke-width="2"/></svg>
    </div>
  </header>

  <section class="ribbon">
    <div class="group g0">
      <div class="initproj">
        <svg class="w32" viewBox="0 0 32 32"><path d="M3 1h10l5 5v15H3z" fill="#d8dcec" stroke="#9aa0b8"/><path d="M6 9h9M6 12h9M6 15h9" stroke="#889"/><rect x="20" y="14" width="5" height="4" fill="#f0e070" stroke="#887"/><path d="M23 18v12M23 23h3M23 28h3" stroke="#666"/><rect x="26" y="21" width="4" height="4" fill="#f0e070" stroke="#887"/><rect x="26" y="26" width="4" height="4" fill="#f0e070" stroke="#887"/></svg>
        <span>初始化项目</span>
      </div>
    </div>

    <div class="group w123">
      <div class="box c3"><svg class="ic"><use href="#p1"/></svg><svg class="ic"><use href="#p2"/></svg><svg class="ic"><use href="#p3"/></svg><svg class="ic"><use href="#p4"/></svg><svg class="ic"><use href="#p5"/></svg></div>
      <div class="arrows"><i class="up"></i><i class="dn"></i><i class="more"></i></div>
      <div class="glabel">部件验证</div><i class="caret"></i>
    </div>

    <div class="group w319">
      <div class="box c9"><svg class="ic"><use href="#m1"/></svg><svg class="ic"><use href="#m2"/></svg><svg class="ic"><use href="#m3"/></svg><svg class="ic"><use href="#m4"/></svg><svg class="ic"><use href="#m5"/></svg><svg class="ic"><use href="#m6"/></svg><svg class="ic"><use href="#m7"/></svg><svg class="ic"><use href="#m8"/></svg><svg class="ic"><use href="#m9"/></svg><svg class="ic"><use href="#m10"/></svg><svg class="ic"><use href="#m11"/></svg><svg class="ic"><use href="#m12"/></svg><svg class="ic"><use href="#m13"/></svg><svg class="ic"><use href="#m14"/></svg><svg class="ic"><use href="#m15"/></svg><svg class="ic"><use href="#m16"/></svg><svg class="ic"><use href="#m17"/></svg><svg class="ic"><use href="#m18"/></svg></div>
      <div class="arrows"><i class="up"></i><i class="dn"></i><i class="more"></i></div>
      <div class="glabel">主要</div><i class="caret"></i>
    </div>

    <div class="group w188">
      <div class="box c5"><svg class="ic"><use href="#p2"/></svg><svg class="ic"><use href="#s2"/></svg><svg class="ic"><use href="#s3"/></svg><svg class="ic"><use href="#s4"/></svg><svg class="ic"><use href="#s5"/></svg><svg class="ic"><use href="#s6"/></svg><svg class="ic"><use href="#s7"/></svg><svg class="ic"><use href="#s8"/></svg><svg class="ic"><use href="#s9"/></svg></div>
      <div class="arrows"><i class="up"></i><i class="dn"></i><i class="more"></i></div>
      <div class="glabel">分型刀具</div><i class="caret"></i>
    </div>

    <div class="group w189">
      <div class="box c5"><svg class="ic"><use href="#c1"/></svg><svg class="ic"><use href="#c2"/></svg><svg class="ic"><use href="#c3"/></svg><svg class="ic"><use href="#c4"/></svg><svg class="ic"><use href="#c5"/></svg><svg class="ic"><use href="#c6"/></svg><svg class="ic"><use href="#c7"/></svg><svg class="ic"><use href="#c8"/></svg><svg class="ic"><use href="#c9"/></svg></div>
      <div class="arrows"><i class="up"></i><i class="dn"></i><i class="more"></i></div>
      <div class="glabel">冷却工具</div><i class="caret"></i>
    </div>

    <div class="group w352">
      <div class="box c10"><svg class="ic"><use href="#t1"/></svg><svg class="ic"><use href="#t2"/></svg><svg class="ic"><use href="#t3"/></svg><svg class="ic"><use href="#t4"/></svg><svg class="ic"><use href="#t5"/></svg><svg class="ic"><use href="#t6"/></svg><svg class="ic"><use href="#t7"/></svg><svg class="ic"><use href="#t8"/></svg><svg class="ic"><use href="#t9"/></svg><svg class="ic"><use href="#t10"/></svg><svg class="ic"><use href="#t11"/></svg><svg class="ic"><use href="#t12"/></svg><svg class="ic"><use href="#t13"/></svg><svg class="ic"><use href="#t14"/></svg><svg class="ic"><use href="#t15"/></svg><svg class="ic"><use href="#t16"/></svg><svg class="ic"><use href="#t17"/></svg><svg class="ic"><use href="#t18"/></svg><svg class="ic"><use href="#t19"/></svg><svg class="ic"><use href="#t20"/></svg></div>
      <div class="arrows"><i class="up"></i><i class="dn"></i><i class="more"></i></div>
      <div class="glabel">注塑模工具</div><i class="caret"></i>
    </div>

    <div class="group w122">
      <div class="box c3"><svg class="ic"><use href="#v1"/></svg><svg class="ic"><use href="#v2"/></svg><svg class="ic"><use href="#v3"/></svg><svg class="ic"><use href="#v4"/></svg><svg class="ic"><use href="#v5"/></svg><svg class="ic"><use href="#v6"/></svg></div>
      <div class="arrows"><i class="up"></i><i class="dn"></i><i class="more"></i></div>
      <div class="glabel">工具验证</div><i class="caret"></i>
    </div>

    <div class="group w122">
      <div class="box c3"><svg class="ic"><use href="#d1"/></svg><svg class="ic"><use href="#d2"/></svg><svg class="ic"><use href="#d3"/></svg><svg class="ic"><use href="#d4"/></svg><svg class="ic"><use href="#d5"/></svg><svg class="ic"><use href="#d6"/></svg></div>
      <div class="arrows"><i class="up"></i><i class="dn"></i><i class="more"></i></div>
      <div class="glabel">模具图纸</div><i class="caret"></i>
    </div>
    <i class="caret ribbon-end"></i>
  </section>

  <section class="toolbar">
    <div class="menubtn">
      <svg class="w16" viewBox="0 0 16 16"><path d="M1 2h13M1 5h13" stroke="#3a6ad0" stroke-width="1.600"/><path d="M3 8h10M5 11h8" stroke="#333"/><path d="M9 7l5 6-2 1 1 2-2 0-1-2-2 1z" fill="#ddd" stroke="#333" stroke-width=".6"/></svg>
      <span>菜单(<u>M</u>)</span><i class="caret"></i>
    </div>
    <div class="tsep"></div>
    <div class="select s1"><i class="seltri"></i></div>
    <div class="select s2"><span>仅在工作部件内</span><i class="seltri"></i></div>
    <div class="tools">
      <svg class="tb"><use href="#g1"/></svg><svg class="tb"><use href="#g2"/></svg><svg class="tb"><use href="#g3"/></svg><i class="caret"></i><svg class="tb"><use href="#g4"/></svg><svg class="tb"><use href="#g5"/></svg><svg class="tb"><use href="#g6"/></svg><i class="caret"></i><svg class="tb"><use href="#g7"/></svg><svg class="tb"><use href="#g8"/></svg><svg class="tb"><use href="#g9"/></svg><svg class="tb"><use href="#g10"/></svg><svg class="tb"><use href="#g11"/></svg><svg class="tb"><use href="#g12"/></svg><svg class="tb"><use href="#g13"/></svg><svg class="tb"><use href="#g14"/></svg><svg class="tb"><use href="#g15"/></svg><svg class="tb"><use href="#g16"/></svg><svg class="tb"><use href="#g17"/></svg><svg class="tb"><use href="#g18"/></svg><svg class="tb"><use href="#g19"/></svg>
    </div>
    <div class="tsep sp2"></div>
    <div class="tools tools2">
      <svg class="tb"><use href="#n1"/></svg><svg class="tb"><use href="#n2"/></svg><svg class="tb"><use href="#n3"/></svg><svg class="tb"><use href="#n4"/></svg><i class="caret"></i><svg class="tb"><use href="#n5"/></svg><i class="caret"></i><svg class="tb"><use href="#n6"/></svg><i class="caret"></i><svg class="tb"><use href="#n7"/></svg><i class="caret"></i>
    </div>
    <div class="tsep sp3"></div>
    <i class="caret ribbon-end"></i>
  </section>

  <main class="work">
    <aside class="rail">
      <svg class="railgear" viewBox="0 0 16 16"><circle cx="8" cy="8" r="4.500" fill="none" stroke="#444" stroke-width="2"/><path d="M8 1v3M8 12v3M1 8h3M12 8h3M3 3l2 2M11 11l2 2M13 3l-2 2M5 11l-2 2" stroke="#444" stroke-width="1.500"/></svg>
      <div class="railtab on"><svg class="ri"><use href="#l1"/></svg></div>
      <div class="railtab h43"><svg class="ri"><use href="#l2"/></svg></div>
      <div class="railtab h44"><svg class="ri"><use href="#l3"/></svg></div>
      <div class="railtab h53"><svg class="ri"><use href="#l4"/></svg></div>
      <div class="railtab h54"><svg class="ri"><use href="#l5"/></svg></div>
      <div class="railtab h52"><svg class="ri"><use href="#l6"/></svg></div>
      <div class="railtab h44"><svg class="ri"><use href="#l7"/></svg></div>
      <div class="railtab h42"><svg class="ri"><use href="#l8"/></svg></div>
      <div class="railtab h42"><svg class="ri"><use href="#l9"/></svg></div>
      <div class="railtab h40"><svg class="ri"><use href="#l10"/></svg></div>
      <div class="railtab h42"><svg class="ri"><use href="#l11"/></svg></div>
      <div class="railtab h40"><svg class="ri"><use href="#l12"/></svg></div>
    </aside>

    <section class="panel">
      <div class="ptitle"><span>装配导航器</span><i class="maxbtn"></i></div>
      <div class="grid">
        <div class="row head">
          <div class="cell name">描述性部件名<i class="sorttri"></i></div><div class="cell">信息</div><div class="cell mid">只</div><div class="cell mid">已</div><div class="cell">数量</div><div class="cell last">引用集</div>
        </div>
        <div class="row">
          <div class="cell name"><svg class="tw t19" viewBox="0 0 19 20"><path d="M10.500 20V10h8" fill="none" stroke="#888" stroke-dasharray="1 1"/></svg><svg class="i16"><use href="#folder"/></svg><span class="lbl">截面</span></div><div class="cell"></div><div class="cell"></div><div class="cell"></div><div class="cell"></div><div class="cell last"></div>
        </div>
        <div class="row">
          <div class="cell name"><svg class="tw t21" viewBox="0 0 21 20"><rect x="6.500" y="6.500" width="7" height="7" fill="#fff" stroke="#999"/><path d="M8 10h4" stroke="#111"/><path d="M14 10h6" stroke="#888" stroke-dasharray="1 1"/></svg><i class="chk red"></i><svg class="i16"><use href="#asm"/></svg><b class="lbl top">_model2_top_001 （顺序：时...</b></div><div class="cell"></div><div class="cell ico"><svg class="i14"><use href="#save"/></svg></div><div class="cell ico"><svg class="i14"><use href="#edit"/></svg></div><div class="cell"><b>26</b></div><div class="cell last"></div>
        </div>
        <div class="row off">
          <div class="cell name"><svg class="tw t40" viewBox="0 0 40 20"><path d="M28.500 0v20M33 10h6" fill="none" stroke="#888" stroke-dasharray="1 1"/><rect x="25" y="6.500" width="7" height="7" fill="#fff" stroke="#999"/><path d="M26.500 10h4M28.500 8v4" stroke="#111"/></svg><i class="chk"></i><svg class="i16"><use href="#asm"/></svg><span class="lbl">_model2_layout_022</span></div><div class="cell"></div><div class="cell ico"><svg class="i14"><use href="#save"/></svg></div><div class="cell ico"><svg class="i14"><use href="#edit"/></svg></div><div class="cell">17</div><div class="cell last">整个部件</div>
        </div>
        <div class="row off">
          <div class="cell name"><svg class="tw t40" viewBox="0 0 40 20"><path d="M28.500 0v20M33 10h6" fill="none" stroke="#888" stroke-dasharray="1 1"/><rect x="25" y="6.500" width="7" height="7" fill="#fff" stroke="#999"/><path d="M26.500 10h4M28.500 8v4" stroke="#111"/></svg><i class="chk"></i><svg class="i16"><use href="#asm"/></svg><span class="lbl">_model2_misc_006</span></div><div class="cell"></div><div class="cell ico"><svg class="i14"><use href="#save"/></svg></div><div class="cell ico"><svg class="i14"><use href="#edit"/></svg></div><div class="cell">3</div><div class="cell last">整个部件</div>
        </div>
        <div class="row off">
          <div class="cell name"><svg class="tw t40" viewBox="0 0 40 20"><path d="M28.500 0v20M29 10h10" fill="none" stroke="#888" stroke-dasharray="1 1"/></svg><i class="chk"></i><svg class="i16"><use href="#part"/></svg><span class="lbl">_model2_fill_014</span></div><div class="cell"></div><div class="cell ico"><svg class="i14"><use href="#save"/></svg></div><div class="cell ico"><svg class="i14"><use href="#edit"/></svg></div><div class="cell"></div><div class="cell last">整个部件</div>
        </div>
        <div class="row off">
          <div class="cell name"><svg class="tw t40" viewBox="0 0 40 20"><path d="M28.500 0v20M33 10h6" fill="none" stroke="#888" stroke-dasharray="1 1"/><rect x="25" y="6.500" width="7" height="7" fill="#fff" stroke="#999"/><path d="M26.500 10h4M28.500 8v4" stroke="#111"/></svg><i class="chk"></i><svg class="i16"><use href="#asm"/></svg><span class="lbl">_model2_cool_002</span></div><div class="cell"></div><div class="cell ico"><svg class="i14"><use href="#save"/></svg></div><div class="cell ico"><svg class="i14"><use href="#edit"/></svg></div><div class="cell">3</div><div class="cell last">整个部件</div>
        </div>
        <div class="row off">
          <div class="cell name"><svg class="tw t40" viewBox="0 0 40 20"><path d="M28.500 0v10h10" fill="none" stroke="#888" stroke-dasharray="1 1"/></svg><i class="chk"></i><svg class="i16"><use href="#part"/></svg><span class="lbl">_model2_var_011</span></div><div class="cell"></div><div class="cell ico"><svg class="i14"><use href="#save"/></svg></div><div class="cell ico"><svg class="i14"><use href="#edit"/></svg></div><div class="cell"></div><div class="cell last">整个部件</div>
        </div>
        <div class="filler"></div>
        <div class="hscroll"><i></i></div>
      </div>
      <div class="splitter"></div>
      <div class="fold"><span>预览</span><svg class="chev" viewBox="0 0 12 10"><path d="M1 2l5 6 5-6" fill="none" stroke="#3a8fc4" stroke-width="1.800"/></svg></div>
      <div class="fold"><span>相依性</span><svg class="chev" viewBox="0 0 12 10"><path d="M1 2l5 6 5-6" fill="none" stroke="#3a8fc4" stroke-width="1.800"/></svg></div>
    </section>

    <section class="viewport">
      <svg class="scene" viewBox="476 153 1444 829" preserveAspectRatio="none">
        <defs>
          <linearGradient id="body" gradientUnits="userSpaceOnUse" x1="50" y1="1350" x2="1150" y2="720"><stop offset="0" stop-color="#743a1b"/><stop offset=".3" stop-color="#9c542b"/><stop offset=".65" stop-color="#d36d35"/><stop offset="1" stop-color="#e67c3d"/></linearGradient>
          <linearGradient id="shade" x1="0" y1="0" x2="0" y2="1"><stop offset=".55" stop-color="#000" stop-opacity="0"/><stop offset="1" stop-color="#3a1500" stop-opacity=".2"/></linearGradient>
          <linearGradient id="dome" x1="0" y1="0" x2="1" y2="0"><stop offset="0" stop-color="#d06c36"/><stop offset=".14" stop-color="#f57f3d"/><stop offset=".3" stop-color="#ff853f"/><stop offset=".8" stop-color="#ff8a45"/><stop offset=".94" stop-color="#fb8443"/><stop offset="1" stop-color="#e07539"/></linearGradient>
          <radialGradient id="hl1"><stop offset="0" stop-color="#fff7b4"/><stop offset=".4" stop-color="#ffd88c" stop-opacity=".85"/><stop offset="1" stop-color="#ffa860" stop-opacity="0"/></radialGradient>
          <radialGradient id="hl2"><stop offset="0" stop-color="#ffc68a" stop-opacity=".95"/><stop offset="1" stop-color="#ffa060" stop-opacity="0"/></radialGradient>
          <linearGradient id="n-a" x1="0" x2="1" y1="0" y2="0"><stop offset="0" stop-color="#84421f"/><stop offset=".5" stop-color="#763a1b"/><stop offset="1" stop-color="#7e3f1d"/></linearGradient>
          <linearGradient id="n-b" x1="0" x2="1" y1="0" y2="0"><stop offset="0" stop-color="#a05227"/><stop offset=".5" stop-color="#9a4e26"/><stop offset="1" stop-color="#743819"/></linearGradient>
          <linearGradient id="n-c" x1="0" x2="1" y1="0" y2="0"><stop offset="0" stop-color="#b35b2c"/><stop offset=".5" stop-color="#a85529"/><stop offset="1" stop-color="#9a4e26"/></linearGradient>
          <clipPath id="domeclip"><path d="M155 375C190 280 250 190 320 130 430 40 600-15 790-15 980-15 1160 50 1280 170 1340 235 1385 310 1408 420 1408 620 1080 780 780 780 480 780 150 620 150 420Z"/></clipPath>
        </defs>
        <svg class="model" x="660" y="280" width="900" height="600" viewBox="0 0 1568 1568" preserveAspectRatio="none">
          <g class="edges">
            <path id="bodyp" fill="url(#body)" d="M155 375C135 430 125 480 115 515 90 650 60 860 40 1100L37 1170C55 1215 75 1260 100 1288 130 1300 200 1305 250 1340 285 1365 300 1385 312 1420 318 1440 325 1445 335 1448L510 1503 545 1500C590 1490 640 1478 700 1480 760 1485 810 1505 865 1520L885 1527 1095 1492C1110 1485 1120 1455 1135 1435 1175 1395 1250 1370 1300 1365 1340 1362 1370 1365 1385 1358L1482 1255 1475 1085 1520 1048C1515 900 1490 750 1445 550L1408 420 780 300Z"/>
            <path class="noline" fill="url(#shade)" d="M115 515C90 650 60 860 40 1100L37 1170C55 1215 75 1260 100 1288 130 1300 200 1305 250 1340 285 1365 300 1385 312 1420 318 1440 325 1445 335 1448L510 1503 545 1500C590 1490 640 1478 700 1480 760 1485 810 1505 865 1520L885 1527 1095 1492C1110 1485 1120 1455 1135 1435 1175 1395 1250 1370 1300 1365 1340 1362 1370 1365 1385 1358L1482 1255 1475 1085 1520 1048C1515 900 1490 750 1445 550Z"/>
            <path fill="#a4552a" d="M97 1285C110 1130 140 950 190 840 215 790 240 782 250 782 275 785 300 830 312 910 328 1020 335 1250 335 1445 300 1380 200 1300 97 1285Z"/>
            <path fill="url(#n-a)" d="M120 1292C130 1130 160 960 200 855 222 810 240 802 248 802 268 805 288 840 298 910 312 1020 320 1250 322 1430 290 1370 200 1305 120 1292Z"/>
            <path fill="#b05a2a" d="M512 1503C525 1300 560 1120 620 990 650 930 690 913 705 913 730 913 760 940 785 985 840 1090 880 1300 895 1525L865 1520C800 1500 750 1482 700 1480 640 1478 590 1490 545 1500Z"/>
            <path fill="url(#n-b)" d="M545 1500C555 1300 585 1130 635 1005 660 950 690 933 705 933 725 933 750 955 770 995 820 1090 855 1300 865 1520 800 1500 750 1482 700 1480 640 1478 590 1490 545 1500Z"/>
            <path fill="#bd622f" d="M1087 1490C1090 1300 1105 1100 1150 900 1165 840 1200 822 1212 822 1235 825 1260 850 1285 910 1330 1020 1370 1200 1387 1360 1340 1365 1230 1370 1135 1435 1120 1455 1105 1480 1087 1490Z"/>
            <path fill="url(#n-c)" d="M1108 1480C1110 1300 1125 1110 1162 920 1175 860 1200 842 1208 842 1228 845 1250 870 1270 925 1310 1030 1345 1200 1358 1362 1300 1365 1190 1385 1135 1435 1125 1450 1118 1465 1108 1480Z"/>
            <path fill="#b35b2c" d="M1437 590C1445 575 1460 600 1470 650 1490 750 1505 900 1510 1045L1480 1080C1475 900 1460 720 1437 590Z"/>
            <path fill="none" d="M1440 570C1470 640 1500 820 1520 1048"/>
          </g>
          <path fill="url(#dome)" d="M155 375C190 280 250 190 320 130 430 40 600-15 790-15 980-15 1160 50 1280 170 1340 235 1385 310 1408 420 1408 620 1080 780 780 780 480 780 150 620 150 420Z"/>
          <g clip-path="url(#domeclip)">
            <ellipse cx="1050" cy="665" rx="240" ry="110" fill="url(#hl1)"/>
            <ellipse cx="530" cy="690" rx="190" ry="85" fill="url(#hl2)"/>
          </g>
          <g class="edges">
            <path fill="none" d="M150 420C150 620 480 780 780 780 1080 780 1408 620 1408 420"/>
            <ellipse class="lid" cx="780" cy="258" rx="458" ry="260"/>
          </g>
        </svg>

        <polygon class="gz-z" points="1107,652 1110,672 1108,700 1106,700 1105,672"/>
        <polygon class="gz-y" points="1111,703 1139,692 1151,691 1143,697 1139,695"/>
        <polygon class="gz-x" points="1109,705 1127,709 1143,721 1129,717"/>
        <text class="lz" x="1112" y="650">ZC</text><text class="ly" x="1137" y="687">YC</text><text class="lx" x="1127" y="733">XC</text>

        <g class="triad">
          <path class="cube" d="M543 893l19-10 18 8v22l-18 9-19-7zM543 893l19 7 18-9M562 900v22"/>
          <path class="tz" d="M541.500 914V885"/><polygon class="tzh" points="541.500,873 544.500,886 538.500,886"/>
          <path class="ty" d="M543 915l33-10"/>
          <path class="tx" d="M543 916l24 11"/><polygon class="txh" points="570,929 559,927 563,920"/>
          <circle class="to" cx="541" cy="915" r="3.500"/>
          <text class="lz" x="537" y="875">Z</text><text class="ly ty2" x="578" y="909">Y</text><text class="lx" x="569" y="935">X</text>
        </g>

        <g class="redarrows">
          <polygon points="1387,294 1576,230 1574,225 1592,228 1577,240 1576,235"/>
          <polygon points="1721,538 1741,400 1746,360 1742,362 1751,347 1757,360 1752,360 1747,400"/>
          <polygon points="1475.500,879 1178,726 1181,717 1162,717 1169,730 1172,728 1476,880"/>
        </g>
      </svg>

      <div class="dialog">
        <div class="dtitle">
          <svg class="w16 dgear" viewBox="0 0 16 16"><circle cx="8" cy="8" r="4" fill="none" stroke="#fff" stroke-width="2.400"/><path d="M8 0v3M8 13v3M0 8h3M13 8h3M2.500 2.500l2 2M11.500 11.500l2 2M13.500 2.500l-2 2M4.500 11.500l-2 2" stroke="#fff" stroke-width="2"/></svg>
          <span>模具 CSYS</span>
          <svg class="w14 dreset" viewBox="0 0 14 14"><path d="M7 2a5 5 0 1 1-5 5" fill="none" stroke="#fff" stroke-width="1.800"/><path d="M7 0v4H3z" fill="#fff"/></svg>
          <svg class="w14" viewBox="0 0 14 14"><path d="M2 2l10 10M12 2L2 12" stroke="#fff" stroke-width="1.800"/></svg>
        </div>
        <div class="dsec">
          <div class="dhead"><span>更改产品位置</span><svg class="chev" viewBox="0 0 12 10"><path d="M1 8l5-6 5 6" fill="none" stroke="#2a86c0" stroke-width="1.800"/></svg></div>
          <div class="opt"><i class="radio on"></i><span class="focus">当前 WCS</span></div>
          <div class="opt"><i class="radio"></i><span>产品实体中心</span></div>
          <div class="opt"><i class="radio"></i><span>选定面的中心</span></div>
        </div>
        <div class="dmore"><i></i></div>
        <div class="dbtns"><button class="btn primary">确定</button><button class="btn">应用</button><button class="btn">取消</button></div>
      </div>
    </section>

    <div class="stats"><div>CPU   2%</div><div>GPU   0%</div><div>VRAM  16%</div><div>RAM   47%</div><div>FPS    2</div></div>
  </main>

  <footer class="status">
    <span>双击 WCS 以更改它或接受当前 WCS</span>
    <div class="statusicons">
      <svg class="w16" viewBox="0 0 16 16"><rect width="16" height="16" fill="#ddd"/><path d="M3 3l9 1-1 8H6z" fill="#999"/><path d="M5 5h2v2H5zM9 5h2v2H9zM7 7h2v2H7z" fill="#fff"/></svg>
      <svg class="w16" viewBox="0 0 16 16"><path d="M1 4V1h3M12 1h3v3M15 12v3h-3M4 15H1v-3" fill="none" stroke="#888"/><rect x="3" y="3" width="10" height="10" fill="#cde" stroke="#445"/><rect x="3" y="3" width="10" height="3" fill="#2a4a9a"/></svg>
    </div>
  </footer>

  <div class="taskbar">
    <div class="tasks">
      <div class="task"><svg class="ti" viewBox="0 0 24 24"><path d="M0 0h11.500v11.500H0z" fill="#28a8ea"/><path d="M12.500 0H24v11.500H12.500z" fill="#3cc4f4"/><path d="M0 12.500h11.500V24H0z" fill="#1488dc"/><path d="M12.500 12.500H24V24H12.500z" fill="#0f7ad8"/></svg></div>
      <div class="task"><svg class="ti" viewBox="0 0 24 24"><rect x="1" y="8" width="17" height="16" fill="#222"/><rect x="7" y="1" width="17" height="16" fill="#f2f2f2"/><rect x="7" y="8" width="11" height="9" fill="#b0b0b0"/></svg></div>
      <div class="task"><svg class="ti" viewBox="0 0 24 24"><rect x="14" y="3" width="9" height="21" fill="#a8b0b8" stroke="#667"/><circle cx="10" cy="13" r="8" fill="#2a8ad0"/><path d="M5 10c4-1 5 3 8 3s2 5-1 7c-4-1-6-5-7-10z" fill="#40a040"/><path d="M2 2l9 6 3-5-2 9-8-3z" fill="#e8b820"/></svg></div>
      <div class="task"><svg class="ti" viewBox="0 0 24 24"><rect width="24" height="24" rx="2" fill="#333"/><rect width="24" height="5" fill="#4a4a4a"/><path d="M4 9l5 4-5 4" fill="none" stroke="#eee" stroke-width="2"/><path d="M11 18h8" stroke="#eee" stroke-width="2"/></svg></div>
      <div class="task"><svg class="ti" viewBox="0 0 24 24"><path d="M9 1h14v14h-8M9 1v14h6" fill="none" stroke="#1d8bd0" stroke-width="3"/><path d="M15 9H2v14h13V9z" fill="none" stroke="#f08a00" stroke-width="3.500"/></svg></div>
      <div class="task"><svg class="ti" viewBox="0 0 24 24"><circle cx="12" cy="12" r="12" fill="#1ea2ef"/><path d="M4 12h13c1 0 2-1 3-1-1 5-4 8-9 8-4 0-6-3-7-7z" fill="#fff"/><rect x="7" y="8" width="3" height="3" fill="#fff"/><rect x="11" y="8" width="3" height="3" fill="#fff"/><rect x="11" y="4" width="3" height="3" fill="#fff"/></svg></div>
      <div class="task"><svg class="ti" viewBox="0 0 24 24"><path d="M12 0l12 8H0z" fill="#0a5fa8"/><rect y="8" width="24" height="16" fill="#1da0e8"/><path d="M0 8l12 9 12-9v4l-12 7-12-7z" fill="#e8f4fc"/><path d="M0 24l12-8 12 8z" fill="#58bdf0"/></svg></div>
      <div class="task"><svg class="ti" viewBox="0 0 24 24"><path d="M1 13l5-5 4 5-5 5z" fill="#1565c0"/><path d="M5 18L19 3l5 5-14 15z" fill="#2a88e8"/></svg></div>
      <div class="task"><svg class="ti" viewBox="0 0 24 24"><path d="M13 0l11 8v8l-6-1z" fill="#2a8ae0"/><circle cx="13" cy="17" r="7" fill="#0c3a8a"/><rect y="7" width="12" height="12" rx="1" fill="#1a4fc0"/><text class="tv" x="6" y="17">V</text></svg></div>
      <div class="task dot"><svg class="ti" viewBox="0 0 24 24"><path d="M0 2h24l-5 21H14l-2-7-2 7H5z" fill="#e82a20"/><path d="M5 5l4 14 3-10 3 10 4-14" fill="none" stroke="#fff" stroke-width="2"/></svg></div>
      <div class="task"><svg class="ti" viewBox="0 0 24 24"><rect width="24" height="24" fill="#3c3c3c"/><rect x="4" y="4" width="16" height="16" fill="#f07a20"/><path d="M12 6v5M7 17v-4h10v4" fill="none" stroke="#fff" stroke-width="2"/><rect x="10" y="6" width="4" height="4" fill="#fff"/><rect x="5" y="15" width="4" height="4" fill="#fff"/><rect x="15" y="15" width="4" height="4" fill="#fff"/></svg></div>
      <div class="task"><svg class="ti" viewBox="0 0 24 24"><path d="M2 4l18-4 3 20-18 4z" fill="#e8401a"/><path d="M5 8l7 6 7-9M12 14l-6 6M12 14l7 5" fill="none" stroke="#fff" stroke-width="1.600"/></svg></div>
      <div class="task"><svg class="ti" viewBox="0 0 24 24"><rect x="2" y="1" width="20" height="22" rx="3" fill="#f8f8f8" stroke="#ddd"/><text class="tt" x="12" y="17">T</text></svg></div>
      <div class="task dot"><svg class="ti" viewBox="0 0 24 24"><circle cx="12" cy="12" r="12" fill="#e33"/><path d="M12 12L1.600 18A12 12 0 0 0 12 24l6-12z" fill="#3aa84a"/><path d="M12 0a12 12 0 0 1 10.400 6H12z" fill="#e33"/><path d="M12 6h10.400A12 12 0 0 1 12 24l5.500-9z" fill="#fbc02d"/><path d="M1.600 6A12 12 0 0 0 1.600 18L7 12z" fill="#3aa84a"/><circle cx="12" cy="12" r="5.500" fill="#1a73e8" stroke="#fff" stroke-width="1.500"/></svg></div>
      <div class="task active"><svg class="ti" viewBox="0 0 24 24"><circle cx="13" cy="14" r="10" fill="url(#gl)"/><path d="M3 15c6-1 14-7 19-10 2 2-2 8-8 12-5 2-10 2-11-2z" fill="#f4c020"/><path d="M2 0l9 3-6 10z" fill="#d8203a"/></svg></div>
    </div>
    <div class="tray">
      <svg class="w14" viewBox="0 0 14 14"><path d="M2 10l5-5 5 5" fill="none" stroke="#222" stroke-width="1.500"/></svg>
      <svg class="w18" viewBox="0 0 18 18"><ellipse cx="7" cy="7" rx="6.500" ry="5.500" fill="#2ec24a"/><ellipse cx="12.500" cy="12" rx="5" ry="4" fill="#e4e4e4"/></svg>
      <svg class="w18" viewBox="0 0 18 18"><rect width="14" height="14" rx="2" fill="#1c8aee"/><path d="M3 4l6 2 1-2v7l-2-3-4 3 2-4z" fill="#fff"/><circle cx="13" cy="13" r="5" fill="#f09040"/><path d="M11 12h4M11 14h4" stroke="#fff"/></svg>
      <span class="ime">英</span>
      <svg class="w18" viewBox="0 0 18 18"><path d="M1 7c5-5 11-5 16 0M4 10c3-3 7-3 10 0M7 13c1-1 3-1 4 0" fill="none" stroke="#222" stroke-width="1.300"/><circle cx="9" cy="15" r="1" fill="#222"/></svg>
      <svg class="w18" viewBox="0 0 18 18"><path d="M1 7h3l4-4v12l-4-4H1z" fill="none" stroke="#222"/><path d="M10 6c2 2 2 4 0 6M12.500 4c3 3 3 7 0 10" fill="none" stroke="#666"/></svg>
      <svg class="w18" viewBox="0 0 18 18"><path d="M1 1v4M4 1v4M0 5h5v2H0zM2.500 7v4" stroke="#111" fill="#111"/><rect x="5" y="4" width="11" height="10" fill="#fff" stroke="#111"/><rect x="6" y="5" width="9" height="8" fill="#111"/><rect x="16" y="7" width="2" height="4" fill="#111"/></svg>
      <div class="clock"><span>22:36</span><span>2022/11/19</span></div>
      <svg class="w18 moon" viewBox="0 0 18 18"><path d="M9 1c2 4 2 8-6 12 4 4 12 3 13-3 0-3-3-7-7-9z" fill="none" stroke="#333"/></svg>
      <span class="wm">jhcos</span>
    </div>
  </div>
</div>
</body>
</html>
```
FILE: styles.css
```css
* { box-sizing: border-box; }
html, body { margin: 0; padding: 0; width: 1920px; height: 1053px; overflow: hidden; background: #fff; }
body { font-family: "Noto Sans", "Noto Sans CJK SC", sans-serif; font-size: 12px; color: #222; }
.defs { position: absolute; width: 0; height: 0; }
i { display: block; font-style: normal; }
svg { display: block; flex: none; }
.w14 { width: 14px; height: 14px; }
.w16 { width: 16px; height: 16px; }
.w18 { width: 18px; height: 18px; }
.w32 { width: 32px; height: 32px; }
.ict { font: 700 6px "Liberation Sans", sans-serif; fill: #222; }
.tv { font: 700 11px "Liberation Sans", sans-serif; fill: #fff; text-anchor: middle; }
.tt { font: 14px "Liberation Serif", serif; fill: #333; text-anchor: middle; }

.app { width: 1920px; height: 1053px; display: flex; flex-direction: column; position: relative; }

/* menu */
.menubar { height: 27px; flex: none; background: #c8d8d6; display: flex; font-size: 13px; font-family: "Noto Sans CJK SC", sans-serif; }
.filetab { width: 81px; background: #5b8781; color: #fff; display: flex; align-items: center; justify-content: center; }
.tabs { display: flex; height: 27px; }
.tab { padding: 0 13px; line-height: 26px; color: #222; }
.tabs .tab:first-child { padding-left: 15px; }
.tab-on { background: #fff; color: #1e88c7; width: 91px; margin-left: 1px; padding: 0; text-align: center; }
.topright { margin-left: auto; display: flex; align-items: center; gap: 6px; padding-right: 7px; }
.sp4 { margin-left: 4px; }
.search { width: 125px; height: 20px; background: #fff; border: 1px solid #aaa; display: flex; align-items: center; justify-content: space-between; padding: 0 3px 0 2px; font-size: 11px; margin-right: 6px; }
.qm { font: bold 11px "Liberation Sans", sans-serif; fill: #fff; text-anchor: middle; }

/* ribbon */
.ribbon { height: 95px; flex: none; display: flex; padding-top: 5px; border-bottom: 2px solid #e0e0e0; position: relative; }
.group { display: grid; grid-template-columns: auto 18px; grid-template-rows: 66px 22px; padding-left: 5px; border-right: 1px solid #ddd; height: 84px; align-content: start; justify-content: start; }
.g0 { display: block; width: 73px; padding: 0; }
.w123 { width: 123px; } .w319 { width: 319px; } .w188 { width: 188px; } .w189 { width: 189px; } .w352 { width: 352px; } .w122 { width: 122px; }
.initproj { display: flex; flex-direction: column; align-items: center; font-size: 11px; font-family: "Noto Sans CJK SC", sans-serif; color: #222; gap: 3px; }
.box { border: 1px solid #d8d8d8; display: grid; grid-auto-rows: 32px; align-items: center; justify-items: center; }
.c3 { width: 98px; grid-template-columns: repeat(3, 1fr); }
.c5 { width: 164px; grid-template-columns: repeat(5, 1fr); }
.c9 { width: 296px; grid-template-columns: repeat(9, 1fr); }
.c10 { width: 329px; grid-template-columns: repeat(10, 1fr); }
.ic { width: 25px; height: 25px; }
.arrows { display: flex; flex-direction: column; align-items: center; }
.arrows i { height: 22px; width: 100%; position: relative; }
.arrows i::after { content: ""; position: absolute; left: 5px; top: 8px; border: 4px solid transparent; }
.arrows .up::after { border-bottom-color: #c8c8c8; top: 5px; }
.arrows .dn::after { border-top-color: #c8c8c8; top: 9px; }
.arrows .more::after { border-top-color: #222; top: 10px; }
.arrows .more::before { content: ""; position: absolute; left: 5px; top: 7px; width: 8px; height: 1px; background: #222; }
.glabel { text-align: center; color: #2a8cc8; font-size: 12px; line-height: 24px; font-family: "Noto Sans CJK SC", sans-serif; }
.caret { width: 0; height: 0; border: 4px solid transparent; border-top-color: #222; border-bottom-width: 0; }
.group > .caret { align-self: center; justify-self: center; }
.ribbon-end { position: absolute; right: 4px; bottom: 8px; }

/* toolbar */
.toolbar { height: 31px; flex: none; display: flex; align-items: center; position: relative; padding-left: 9px; font-family: "Noto Sans CJK SC", sans-serif; }
.menubtn { display: flex; align-items: center; gap: 5px; width: 77px; }
.menubtn .caret { margin-left: -1px; }
.tsep { width: 1px; height: 24px; background: #ddd; }
.select { height: 20px; border: 1px solid #bbb; margin-left: 12px; display: flex; align-items: center; justify-content: space-between; padding: 0 6px 0 2px; color: #aaa; font-size: 12px; }
.select.s1 { width: 134px; justify-content: flex-end; }
.select.s2 { width: 139px; margin-left: 7px; }
.seltri { width: 0; height: 0; border: 4px solid transparent; border-top-color: #bbb; border-bottom-width: 0; }
.tools { display: flex; align-items: center; gap: 5px; margin-left: 8px; }
.tb { width: 21px; height: 21px; }
.tools2 { gap: 4px; margin-left: 10px; }
.sp2 { margin-left: 8px; }
.sp3 { margin-left: 9px; }

/* work area */
.work { flex: 1; display: flex; position: relative; min-height: 0; }
.rail { width: 33px; flex: none; background: #dcdcdc; border-top: 1px solid #999; border-right: 1px solid #aaa; display: flex; flex-direction: column; align-items: center; }
.railgear { width: 16px; height: 16px; margin: 4px 0 19px; }
.railtab { width: 100%; display: flex; align-items: flex-start; justify-content: center; flex: none; }
.railtab.on { height: 45px; background: #fff; border: 1px solid #bbb; border-right: 0; margin: 0 -1px 6px 2px; width: 31px; align-items: center; }
.ri { width: 24px; height: 24px; }
.h40 { height: 40px; } .h42 { height: 42px; } .h43 { height: 43px; } .h44 { height: 44px; } .h52 { height: 52px; } .h53 { height: 53px; } .h54 { height: 54px; }

.panel { width: 443px; flex: none; border-top: 1px solid #999; padding: 0 10px 0 5px; display: flex; flex-direction: column; background: #fff; }
.ptitle { height: 29px; display: flex; align-items: center; justify-content: space-between; padding: 0 5px 4px 4px; font-size: 12px; font-family: "Noto Sans CJK SC", sans-serif; }
.maxbtn { width: 12px; height: 10px; border: 1px solid #111; border-top-width: 2px; margin-top: 2px; }
.grid { height: 741px; border: 1px solid #ddd; display: flex; flex-direction: column; }
.row { height: 20px; flex: none; display: grid; grid-template-columns: 231px 36px 24px 24px 50px 1fr; border-bottom: 1px solid #eee; }
.row:nth-child(even) { background: #fafafa; }
.cell { border-right: 1px solid #ececec; display: flex; align-items: center; padding-left: 5px; white-space: nowrap; overflow: hidden; font-family: "Noto Sans", "Noto Sans CJK SC", sans-serif; }
.cell.name { border-right: 1px solid #000; padding-left: 0; }
.cell.last { border-right: 0; padding-left: 4px; }
.cell.mid { padding-left: 0; justify-content: center; }
.cell.ico { padding-left: 4px; }
.head { background: #f0f0f0 !important; border-bottom: 1px solid #ddd; }
.head .cell { font-family: "Noto Sans CJK SC", sans-serif; border-right-color: #ddd; padding-left: 6px; }
.head .cell.name { padding-left: 7px; border-right-color: #bbb; }
.head .cell.mid { padding-left: 0; }
.sorttri { margin-left: 19px; width: 0; height: 0; border: 5px solid transparent; border-bottom-color: #222; border-top-width: 0; }
.tw { height: 20px; }
.t19 { width: 19px; } .t21 { width: 21px; } .t40 { width: 40px; }
.i16 { width: 16px; height: 16px; margin-right: 3px; }
.i14 { width: 15px; height: 15px; }
.lbl { white-space: nowrap; }
.top { font-weight: 700; letter-spacing: -0.1px; }
.chk { width: 12px; height: 12px; border: 1px solid #111; margin-right: 2px; background: #f6f6f6; position: relative; flex: none; }
.chk::after { content: ""; position: absolute; left: 3px; top: -1px; width: 5px; height: 9px; border: solid #b4b4b4; border-width: 0 2px 2px 0; transform: rotate(40deg); }
.chk.red { background: #fff; }
.chk.red::after { border-color: #e0101c; }
.off { color: #a8a8a8; }
.filler { flex: 1; background:
  linear-gradient(#000, #000) 230px 0 / 1px 100% no-repeat,
  linear-gradient(#ececec, #ececec) 266px 0 / 1px 100% no-repeat,
  linear-gradient(#ececec, #ececec) 290px 0 / 1px 100% no-repeat,
  linear-gradient(#ececec, #ececec) 314px 0 / 1px 100% no-repeat,
  linear-gradient(#ececec, #ececec) 364px 0 / 1px 100% no-repeat,
  repeating-linear-gradient(#fff 0 19px, #eee 19px 20px, #fafafa 20px 39px, #eee 39px 40px); }
.hscroll { height: 18px; flex: none; background: #f0f0f0; position: relative; }
.hscroll i { position: absolute; left: 18px; top: 8px; width: 355px; height: 2px; background: #828282; }
.splitter { height: 5px; background: #d8d8d8; border: 1px solid #aaa; flex: none; }
.fold { height: 24px; flex: none; border-bottom: 2px solid #ccc; display: flex; align-items: center; justify-content: space-between; padding: 2px 6px 0 7px; color: #3a8fc4; font-size: 14px; font-family: "Noto Sans CJK SC", sans-serif; }
.chev { width: 12px; height: 10px; }

.viewport { flex: 1; min-width: 0; position: relative; border: 1px solid #c8302f; border-width: 1px 0 1px 1px; background: linear-gradient(#b5b6b8 0, #c9cacc 30%, #dcdddf 54%, #e6e7e9 78%, #e6e7e9 100%); }
.scene { position: absolute; left: 0; top: 0; width: 100%; height: 100%; }
.edges path, .edges ellipse { stroke: #2f3032; stroke-width: 1.700; vector-effect: non-scaling-stroke; }
.edges .noline { stroke: none; }
.lid { fill: #ff853f; }
.gz-z { fill: #6a80d8; }
.gz-y { fill: #a8e0a0; }
.gz-x { fill: #eaa0a0; }
.lz, .ly, .lx { font: 12px "Liberation Sans", sans-serif; }
.lz { fill: #3438f0; } .ly { fill: #2f9a2a; } .lx { fill: #e03038; }
.ty2 { fill: #7ab080; }
.cube { fill: #bbbcbe; fill-opacity: .55; stroke: #b0b2b0; }
.tz { stroke: #1038c0; stroke-width: 3; }
.tzh { fill: #1038c0; }
.ty { stroke: #a8c0a0; stroke-width: 3; }
.tx { stroke: #c02020; stroke-width: 3; }
.txh { fill: #c02020; }
.to { fill: #ddd; stroke: #888; }
.redarrows polygon { fill: #fb3535; }

/* dialog */
.dialog { position: absolute; right: 0; top: -1px; width: 328px; height: 194px; background: #e6e6e6; z-index: 2; font-family: "Noto Sans CJK SC", sans-serif; display: flex; flex-direction: column; }
.dtitle { height: 24px; background: #5b8781; color: #fff; display: flex; align-items: center; padding: 0 10px 0 8px; font-size: 13px; gap: 7px; }
.dtitle span { margin-right: auto; margin-left: 1px; letter-spacing: .3px; font-family: "Noto Sans", "Noto Sans CJK SC", sans-serif; }
.dgear { width: 14px; height: 14px; }
.dsec { margin: 4px 6px 0 5px; height: 105px; background: #fff; border-bottom: 1px solid #ccc; padding: 0 7px 0 7px; }
.dhead { height: 26px; display: flex; align-items: center; justify-content: space-between; color: #2a86c0; font-size: 14px; }
.opt { height: 23px; display: flex; align-items: center; gap: 5px; padding-left: 2px; font-size: 12px; }
.dhead + .opt { margin-top: 2px; }
.radio { width: 13px; height: 13px; border-radius: 50%; border: 1px solid #777; background: #f4f4f4; flex: none; }
.radio.on { border: 4px solid #0b60b8; background: #fff; }
.focus { outline: 1px dotted #222; padding: 0 2px; line-height: 18px; margin-left: -1px; }
.dmore { height: 17px; margin: 0 6px 0 5px; padding-right: 4px; border-bottom: 1px solid #ccc; display: flex; align-items: center; justify-content: center; }
.dmore i { width: 0; height: 0; border: 5px solid transparent; border-top-color: #222; border-bottom-width: 0; border-top-width: 5px; }
.dbtns { display: flex; justify-content: flex-end; gap: 5px; padding: 8px 17px 0 0; }
.btn { width: 54px; height: 25px; background: #c9cbcd; border: 1px solid #aaa; font: 12px "Noto Sans CJK SC", sans-serif; color: #222; padding: 0; }
.primary { background: #93c6e4; border-color: #5aa5d6; }

.stats { position: absolute; left: 15px; top: 646px; color: #0f0; font: 700 15px/24px "Liberation Sans Narrow", "Roboto", sans-serif; letter-spacing: .4px; z-index: 3; }
.stats div { white-space: pre; }

/* status */
.status { height: 22px; flex: none; background: #fff; border-top: 1px solid #aaa; display: flex; align-items: center; justify-content: space-between; padding: 0 55px 2px 3px; font: 500 11.500px "Noto Sans CJK SC", sans-serif; color: #222; }
.statusicons { display: flex; gap: 4px; }

/* taskbar */
.taskbar { height: 48px; flex: none; position: relative; display: flex; background: linear-gradient(90deg, #d3dfd6 0, #d6e6c6 15%, #e3f1b8 32%, #ddeeb6 55%, #cde6bf 72%, #cde4c5 88%, #d9e1d8 100%); }
.tasks { position: absolute; left: 631px; top: 0; display: flex; height: 48px; align-items: center; }
.task { width: 44px; height: 38px; display: flex; align-items: center; justify-content: center; position: relative; border-radius: 4px; }
.ti { width: 24px; height: 24px; }
.task.dot::after { content: ""; position: absolute; left: 19px; bottom: -3px; width: 5px; height: 3px; border-radius: 2px; background: #6a7a6a; }
.task.active { background: rgba(255,255,255,.55); width: 38px; margin-left: 3px; }
.task.active::after { content: ""; position: absolute; left: 9px; bottom: 0; width: 20px; height: 3px; border-radius: 2px; background: #6a8a3a; }
.tray { position: absolute; right: 0; top: 0; height: 48px; width: 286px; display: flex; align-items: center; font-family: "Noto Sans", "Noto Sans CJK SC", sans-serif; }
.tray > svg { margin-left: 7px; }
.tray > svg:first-child { margin-left: 0; }
.ime { font: 15px "Noto Sans CJK SC", sans-serif; margin: 0 9px 0 9px; }
.clock { display: flex; flex-direction: column; align-items: flex-end; font-size: 11px; line-height: 16px; width: 73px; color: #222; }
.tray .moon { margin-left: 7px; }
.wm { position: absolute; right: 15px; top: 24px; color: rgba(90,90,90,.7); font-size: 11.500px; }
```
